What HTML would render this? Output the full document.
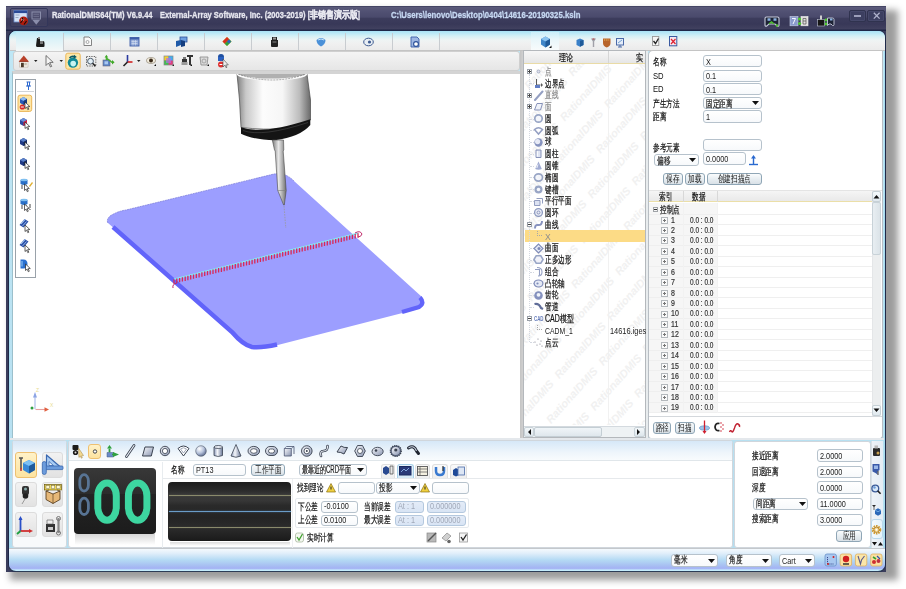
<!DOCTYPE html>
<html><head><meta charset="utf-8">
<style>
*{margin:0;padding:0;box-sizing:border-box}
html,body{width:906px;height:589px;overflow:hidden;background:#fff;font-family:"Liberation Sans",sans-serif;font-size:10px;color:#111}
.a{position:absolute}
.t{position:absolute;white-space:nowrap;transform-origin:0 0;line-height:1}
.c{-webkit-text-stroke:.22px currentColor}
#shadow{left:10px;top:10px;width:888px;height:570px;background:rgba(0,0,0,.39);filter:blur(3.5px)}
#win{left:6px;top:6px;width:880px;height:566px;background:#3a3d5c}
#title{left:6px;top:6px;width:880px;height:25px;background:linear-gradient(#2e3050 0px,#5a5a7a 1px,#505072 6px,#4a4a6c 11px,#3c3c5c 12.5px,#383858 18px,#41415f 23px,#1e2444 24px,#1e2444 25px)}
#client{left:9px;top:31px;width:876px;height:540px;border-radius:7px;background:linear-gradient(#b8e8f8,#c0e6f4 30px,#b4def0);border:1px solid #a8dcef;box-shadow:0 0 0 1px #1e2848}
#tabs{left:10px;top:31px;width:875px;height:19.5px;background:linear-gradient(#a8e2f6 0,#b8e8f6 2px,#d4f0f6 5px,#eef4f4 9px,#f0f0f0 13px,#ebebeb 18.5px,#c4c4c4 18.6px,#c4c4c4 19.5px);border-radius:6px 6px 0 0}
.tab{position:absolute;top:33px;height:17px;width:47px;border-left:1px solid #c8ccd0}
#tb{left:13px;top:51px;width:507px;height:20px;background:linear-gradient(#f4f4f4,#e6e6e6);border:1px solid #cfcfcf;border-radius:3px}
#view{left:11.5px;top:71px;width:508.5px;height:367px;background:#fff;border-top:3px solid #d4d4d4;border-left:1px solid #9cc0cc}
#tree{left:523px;top:50px;width:123px;height:388px;background:#fff;border:1px solid #b9b9b9}
#props{left:647px;top:50px;width:235px;height:388px;background:#fff;border:1px solid #b9b9b9;border-radius:4px}
#bot{left:12px;top:440px;width:870px;height:108px;background:#fafbfc}
#status{left:10px;top:548px;width:874px;height:23px;border-radius:0 0 7px 7px;background:linear-gradient(#eef4fb,#c8d8f4 50%,#a9b5f2)}
.ttl{color:#e8e8f0;font-weight:bold;font-size:9.5px;top:9.5px;-webkit-text-stroke:.3px currentColor}
</style></head><body>
<div id="shadow" class="a"></div>
<div id="win" class="a"></div>
<div id="title" class="a"></div>
<!-- quick access -->
<div class="a" style="left:10px;top:8px;width:38px;height:19px;border:1px solid #33365a;border-radius:2px;background:rgba(255,255,255,.03)"></div>
<svg class="a" style="left:13px;top:9px" width="36" height="18" viewBox="13 9 36 18">
 <rect x="14" y="10.5" width="13" height="11.5" fill="#d4e2f6" stroke="#6a8ac8" stroke-width=".8"/>
 <rect x="14" y="10.5" width="13" height="2.6" fill="#2a4a98"/>
 <path d="M15.5 15 h4 M15.5 17.5 h3" stroke="#8a9ab8" stroke-width=".8"/>
 <circle cx="23.6" cy="20.8" r="4.4" fill="#b01c0c"/><circle cx="22.6" cy="19.6" r="1.6" fill="#f0a898" opacity=".8"/>
 <path d="M20.5 23 l2.5 -3 M24 24.5 l2.5 -3.5 M22 18 l1.5 1.5" stroke="#1a0a08" stroke-width="1.1"/>
 <rect x="32" y="12" width="8.5" height="7" fill="none" stroke="#8a8daa" stroke-width="1"/><path d="M33.5 14.3 h5.5 M33.5 16.6 h5.5" stroke="#7a7d98" stroke-width=".7"/>
 <path d="M32.5 20 h7.5 l-3.75 4.8z" fill="#8a8daa"/>
</svg>
<div class="t ttl" style="left:52px;transform:scaleX(.79)">RationalDMIS64(TM) V6.9.44</div>
<div class="t ttl" style="left:160px;transform:scaleX(.79)">External-Array Software, Inc. (2003-2019) [非销售演示版]</div>
<div class="t ttl" style="left:391px;color:#c6d8f2;transform:scaleX(.815)">C:\Users\lenovo\Desktop\0404\14616-20190325.ksln</div>
<!-- title right icons -->
<svg class="a" style="left:763px;top:14px" width="74" height="14" viewBox="763 14 74 14">
 <path d="M765 18.5 q0 -1.5 1.5 -1.5 h11 q1.5 0 1.5 1.5 v6.5 q0 1.5 -1.5 1.2 l-2.5 -2.2 h-6 l-2.5 2.2 q-1.5 .3 -1.5 -1.2z" fill="#1c2234" stroke="#c8ccdc" stroke-width="1.1"/>
 <rect x="767.5" y="18.3" width="3" height="2.5" fill="#8ab0e0"/><rect x="773.5" y="18.3" width="3" height="2.5" fill="#8ab0e0"/>
 <path d="M769 24 l2.5 -2 l2.5 2" stroke="#50c030" stroke-width="1.5" fill="none"/><circle cx="777" cy="25.5" r="1.2" fill="#50c030"/>
 <rect x="790" y="16.5" width="8" height="9.3" fill="#8a9acc" stroke="#c8d0e8" stroke-width=".6"/><path d="M792 18.5 h3.5 l-2.5 5.5" stroke="#f4f8ff" stroke-width="1" fill="none"/>
 <rect x="801" y="16.5" width="7" height="9.3" fill="#e0dede" stroke="#f0f0f0" stroke-width=".6"/><path d="M803 18.5 h3 v5.5 h-3z M803 21 h3" stroke="#555" stroke-width=".7" fill="none"/>
 <circle cx="799.6" cy="19" r="1.6" fill="#50c830"/><circle cx="799.6" cy="23.5" r="1.6" fill="#50c830"/>
 <rect x="817.5" y="19.5" width="7" height="6.5" fill="#161616" stroke="#bfc4d4" stroke-width=".6"/><path d="M820 15.5 h2 v4 h-2z" fill="#d0d0d0"/>
 <circle cx="826" cy="20" r="1.4" fill="#50c830"/><circle cx="826" cy="24" r="1.4" fill="#50c830"/>
 <path d="M827.5 18 h5 q1.5 0 1.5 1.5 v5 q0 1.5 -1.5 1 l-1.5 -1.5 h-2 l-1.5 1.5z" fill="#1c2234" stroke="#c8ccdc" stroke-width=".9"/><rect x="830" y="18.5" width="2.5" height="2" fill="#8ab0e0"/>
</svg>
<div class="a" style="left:849px;top:9.5px;width:17px;height:12.5px;border:1px solid #30334f;border-radius:2px;background:#3c3f60;box-shadow:inset 0 0 0 1px #45486a"></div>
<div class="a" style="left:867px;top:9.5px;width:17.5px;height:12.5px;border:1px solid #30334f;border-radius:2px;background:#3c3f60;box-shadow:inset 0 0 0 1px #45486a"></div>
<div class="a" style="left:854px;top:15px;width:7px;height:1.5px;background:#9c9fba"></div>
<svg class="a" style="left:873px;top:12px" width="8" height="8"><path d="M.8 .8 L6.6 6.6 M6.6 .8 L.8 6.6" stroke="#b0b3cc" stroke-width="1.3"/></svg>

<div id="client" class="a"></div>
<div id="tabs" class="a"></div>
<div class="a" style="left:16px;top:32px;width:47px;height:18.5px;background:linear-gradient(#c2ecf8,#dcf2f8 40%,#f4f8f8)"></div>
<div class="tab" style="left:63px"></div><div class="tab" style="left:110px"></div><div class="tab" style="left:157px"></div>
<div class="tab" style="left:204px"></div><div class="tab" style="left:251px"></div><div class="tab" style="left:298px"></div>
<div class="tab" style="left:345px"></div><div class="tab" style="left:392px"></div><div class="tab" style="left:439px"></div>
<div id="tb" class="a"></div>
<!-- tab icons -->
<svg class="a" style="left:10px;top:32px" width="512" height="19" viewBox="10 32 512 19">
 <path d="M37 38 h3 v3 h3 q1.5 0 1.5 2 v3 q0 1 -1 1 h-6 q-1.5 0 -1.5 -1.5z" fill="#1c1c1c"/><rect x="38" y="37" width="2" height="2" fill="#888"/><rect x="40" y="41" width="3" height="3" fill="#777"/>
 <path d="M84 37 h5 l2.5 2.5 v6 h-7.5z" fill="#fafafa" stroke="#777" stroke-width=".9"/><circle cx="87.5" cy="42" r="1.5" fill="none" stroke="#888" stroke-width=".7"/>
 <rect x="130" y="37.5" width="9" height="8.5" fill="#8fa6d6" stroke="#3f5ea8" stroke-width=".9"/><rect x="130" y="37.5" width="9" height="2" fill="#3f5ea8"/><path d="M131.5 41.5 h6 M131.5 43.5 h6 M133 40 v5.5 M135.5 40 v5.5" stroke="#d8e2f4" stroke-width=".6"/>
 <rect x="180" y="37" width="7" height="5" fill="#6ea0e0" stroke="#2a4f98" stroke-width=".8"/><path d="M176 41 l5 -1 v5 l-5 2z" fill="#1f5aa8"/><path d="M181 40 l4 1 v5 l-4 1z" fill="#143e80"/>
 <path d="M227 37 l4.5 4.5 l-4.5 4.5 l-4.5 -4.5z" fill="#e0b020"/><path d="M227 37 l-4.5 4.5 l2.3 2.3 l4.5-4.5z" fill="#d83020"/><path d="M231.5 41.5 l-4.5 4.5 l-2.3-2.3 l4.5-4.5z" fill="#30a040"/><path d="M227 41.5 l2 -2 l2 2 l-2 2z" fill="#3060c0"/>
 <path d="M272 37 h5 v3 h1 v6 q0 1 -1 1 h-5 q-1 0 -1 -1 v-6 h1z" fill="#222"/><rect x="273" y="37.5" width="3" height="2" fill="#999"/><rect x="272.5" y="41" width="4" height="2" fill="#555"/>
 <path d="M316.5 40 q4.5 -4 9 0 q0 4 -4.5 6.5 q-4.5 -2.5 -4.5 -6.5z" fill="#4a90d8"/><path d="M318 40 q3 -2 6 0" stroke="#c8e4f8" stroke-width="1" fill="none"/>
 <ellipse cx="368.5" cy="42" rx="4.8" ry="3.8" fill="#e8eef4" stroke="#3d5a90" stroke-width="1"/><circle cx="369.5" cy="42" r="1.6" fill="#3d5a90"/>
 <path d="M411 37 h6 l2 2 v8 h-8z" fill="#9db6e2" stroke="#3a5ea8" stroke-width=".9"/><circle cx="416" cy="44" r="2.4" fill="#fff" stroke="#2a4f98" stroke-width="1.1"/>
</svg>
<!-- toolbar icons -->
<svg class="a" style="left:12px;top:52px" width="509" height="19" viewBox="12 52 509 19">
 <path d="M19.5 61 h8.5 v6.2 h-8.5z" fill="#f4f0ea" stroke="#b8a898" stroke-width=".5"/><path d="M18.6 61.8 l5.2 -6.3 l5.2 6.3 z" fill="#b8402a"/><path d="M19.6 61.5 h8.4" stroke="#8a2a1a" stroke-width=".6"/><rect x="21" y="62.8" width="2.8" height="4.4" fill="#4a3a2a"/><rect x="24.3" y="62.8" width="2.5" height="2.5" fill="#c8c0b0"/>
 <path d="M34 60 h3.5 l-1.75 2z M59.5 60 h3.5 l-1.75 2z M137 60 h3.5 l-1.75 2z" fill="#222"/>
 <path d="M46 55.5 v10 l2.5 -2.5 l2 4 l1.2 -.6 l-2 -4 h3.5z" fill="#f4f4f4" stroke="#555" stroke-width=".8"/>
 <rect x="65.8" y="53.2" width="14.4" height="16" rx="2" fill="#fde6a6" stroke="#eab658" stroke-width="1"/>
 <circle cx="72.9" cy="62.6" r="5.2" fill="#128a96"/><circle cx="73.2" cy="63.6" r="2.8" fill="#c8f4f0"/><path d="M69.5 58 q2.5 -2.5 5.5 -1" stroke="#0a5a66" stroke-width="1.6" fill="none"/><path d="M74 54.8 l2.8 2.3 l-3.2 1.6z" fill="#0a5a66"/>
 <rect x="86.5" y="56.5" width="9.3" height="9.5" fill="none" stroke="#555" stroke-width=".9" stroke-dasharray="1.3 1.1"/><circle cx="90.5" cy="61.2" r="2.9" fill="#e4f0f8" stroke="#4a5a6a" stroke-width="1"/><path d="M92.6 63.3 l2.8 2.8" stroke="#222" stroke-width="1.5"/>
 <rect x="103" y="60" width="7" height="6" fill="#5a84c8" stroke="#6a6a7a" stroke-width=".6"/><rect x="104.5" y="61.3" width="3.5" height="3" fill="#a8c8f0"/><path d="M106.4 57 v3 M106.4 58 l5.5 4.3 h1" stroke="#48b030" stroke-width="1.4" fill="none"/><path d="M104.6 57.5 l1.8 -2.8 l1.8 2.8z M112 60 l2.6 2.3 l-2.6 2.3z" fill="#40a828"/>
 <path d="M127.5 55 v7" stroke="#2a3aa0" stroke-width="1.6"/><path d="M127.5 62 h5" stroke="#d02020" stroke-width="1.6"/><path d="M127.5 62 l-4 4" stroke="#222" stroke-width="1.6"/>
 <ellipse cx="151" cy="60.5" rx="5" ry="3.6" fill="#b0a89a"/><ellipse cx="151" cy="60.5" rx="4" ry="2.4" fill="#f2ecdc"/><circle cx="151" cy="60.5" r="2" fill="#3a2a1a"/><path d="M154 66 l2 -2 v2z M172 66 l2 -2 v2z M190 66 l2 -2 v2z M207 66 l2 -2 v2z" fill="#111"/>
 <rect x="164" y="56" width="9" height="9" fill="#e04080"/><rect x="164" y="56" width="4.5" height="4.5" fill="#f0d030"/><rect x="168.5" y="56" width="4.5" height="4.5" fill="#40b0f0"/><rect x="164" y="60.5" width="4.5" height="4.5" fill="#40c050"/><rect x="166" y="58" width="5" height="5" fill="#b070e0" opacity=".7"/><rect x="164" y="56" width="9" height="9" fill="none" stroke="#888" stroke-width=".7"/>
 <path d="M182 59 h5 v6 h-5z" fill="#333"/><rect x="183" y="57" width="3" height="2" fill="#777"/><path d="M187 56 h6 M190 56 v9" stroke="#333" stroke-width="2"/><rect x="181.5" y="62" width="6" height="3" fill="#999"/>
 <path d="M200 57 h8 l-1 8 h-6z" fill="#dadada" stroke="#888" stroke-width=".8"/><circle cx="204" cy="61" r="2" fill="none" stroke="#999" stroke-width=".8"/>
 <circle cx="221" cy="57" r="3" fill="#2050a0"/><rect x="218" y="57" width="6" height="4" fill="#2a60c0"/><circle cx="221" cy="64.5" r="3" fill="#e03030"/><path d="M219.5 64.5 h3" stroke="#fff" stroke-width="1"/><path d="M223 59 v8 l1.8 -1.8 l1.2 2.5 l1 -.5 l-1.2 -2.3 h2.5z" fill="#eee" stroke="#444" stroke-width=".6"/>
</svg>
<div id="view" class="a"></div>
<!-- viewport scene -->
<svg class="a" style="left:12px;top:74px" width="508" height="364" viewBox="12 74 508 364">
 <defs>
  <linearGradient id="cyl" x1="0" x2="1"><stop offset="0" stop-color="#808080"/><stop offset=".12" stop-color="#c8c8c8"/><stop offset=".35" stop-color="#fcfcfc"/><stop offset=".62" stop-color="#f6f6f6"/><stop offset=".85" stop-color="#bcbcbc"/><stop offset="1" stop-color="#6a6a6a"/></linearGradient>
  <linearGradient id="sty" x1="0" x2="1"><stop offset="0" stop-color="#7a7a7a"/><stop offset=".45" stop-color="#e8e8e8"/><stop offset="1" stop-color="#707070"/></linearGradient>
 </defs>
 <!-- plate thickness -->
 <path d="M108 223 Q106 220 110 216 Q118 211 126 210 L274 174 Q285 172 294 181 L422 297 Q428 304 420 308.5 L272 346.5 Q256 351 247 345 Z" fill="#9c9eff"/>
 <path d="M108 223 Q106 220 110 216 Q118 211 126 210 L274 174 Q285 172 294 181" stroke="#7476d8" stroke-width=".7" fill="none" stroke-dasharray="2 .6"/>
 <path d="M113 227 L232 332 Q243 345 252 347 Q262 348 277 344.5" stroke="#6264fa" stroke-width="4.5" fill="none"/>
 <path d="M420 297.5 Q425 303 419 307 L402 312" stroke="#6264fa" stroke-width="4.2" fill="none"/>
 <!-- scan line -->
 <path d="M174 279.2 L358 233.2" stroke="#86e8f4" stroke-width="1.6" fill="none"/>
 <path d="M174.0 279.3v4.4M176.8 278.6v4.4M179.6 277.9v4.4M182.4 277.2v4.4M185.2 276.5v4.4M187.9 275.8v4.4M190.7 275.1v4.4M193.5 274.4v4.4M196.3 273.7v4.4M199.1 273.0v4.4M201.9 272.3v4.4M204.7 271.6v4.4M207.5 270.9v4.4M210.2 270.2v4.4M213.0 269.5v4.4M215.8 268.8v4.4M218.6 268.1v4.4M221.4 267.5v4.4M224.2 266.8v4.4M227.0 266.1v4.4M229.8 265.4v4.4M232.5 264.7v4.4M235.3 264.0v4.4M238.1 263.3v4.4M240.9 262.6v4.4M243.7 261.9v4.4M246.5 261.2v4.4M249.3 260.5v4.4M252.1 259.8v4.4M254.8 259.1v4.4M257.6 258.4v4.4M260.4 257.7v4.4M263.2 257.0v4.4M266.0 256.3v4.4M268.8 255.6v4.4M271.6 254.9v4.4M274.4 254.2v4.4M277.2 253.5v4.4M279.9 252.8v4.4M282.7 252.1v4.4M285.5 251.4v4.4M288.3 250.7v4.4M291.1 250.0v4.4M293.9 249.3v4.4M296.7 248.6v4.4M299.5 247.9v4.4M302.2 247.2v4.4M305.0 246.5v4.4M307.8 245.8v4.4M310.6 245.1v4.4M313.4 244.5v4.4M316.2 243.8v4.4M319.0 243.1v4.4M321.8 242.4v4.4M324.5 241.7v4.4M327.3 241.0v4.4M330.1 240.3v4.4M332.9 239.6v4.4M335.7 238.9v4.4M338.5 238.2v4.4M341.3 237.5v4.4M344.1 236.8v4.4M346.8 236.1v4.4M349.6 235.4v4.4M352.4 234.7v4.4M355.2 234.0v4.4M358.0 233.3v4.4" stroke="#d82a58" stroke-width="1.3" fill="none"/>
 <path d="M355 233 q5 -3 7 1 q-1 3 -4 3" stroke="#c02a6a" stroke-width="1" fill="none"/><path d="M177 283 q-5 1 -4 5" stroke="#c02a6a" stroke-width="1" fill="none"/>
 <!-- probe -->
 <path d="M237 74 L307 74 L310.5 100 L310.5 120 Q290 133 241 127.5 L239.5 100 Z" fill="url(#cyl)" stroke="#4a4a4a" stroke-width=".7"/>
 <ellipse cx="272" cy="73.5" rx="34.5" ry="6" fill="#b0b0b0" stroke="#fafafa" stroke-width="2"/><path d="M238 74 Q272 86 306 74" stroke="#555" stroke-width=".5" fill="none" stroke-dasharray="2 1"/>
 <path d="M241 127.3 Q262 135 310.3 119.3 V125 Q300 137 275 140.3 Q250 139 241 133.8 Z" fill="#141414"/>
 <path d="M243 130.5 Q262 137.5 308 122.5" stroke="#4a4a4a" stroke-width=".6" fill="none"/>
  <path d="M272.3 140 L283.5 140 L283.8 150 L283.2 151 L286.2 190.5 L284.3 205 L283.6 205 L277.8 190.5 L275.2 151 L274.5 150 Z" fill="url(#sty)" stroke="#4a4a4a" stroke-width=".6"/>
 <path d="M277.8 190.5 L286.2 190.5" stroke="#7a7a7a" stroke-width=".6"/>
 <path d="M284 206 L285.8 228" stroke="#9a9ab0" stroke-width="1" stroke-dasharray="1.6 1.1"/>
 <!-- axis triad -->
 <path d="M35 409 V395" stroke="#a8b8e8" stroke-width="1.1"/><path d="M33 397.5 l2 -5.5 l2 5.5z" fill="#8ca4e4"/>
 <path d="M35.5 409.5 H45" stroke="#e8a0a0" stroke-width="1.1"/><path d="M44.5 407.3 l4.5 2.2 l-4.5 2.2z" fill="#e06040"/>
 <circle cx="32" cy="408" r="1.5" fill="#30a040"/>
 <text x="36" y="391.5" font-size="5" fill="#e8dc90" font-family="Liberation Sans">Z</text><text x="50" y="406.5" font-size="5" fill="#e8dc90" font-family="Liberation Sans">X</text>
</svg>
<!-- floating left toolbar -->
<div class="a" style="left:15px;top:79px;width:21px;height:199px;border:1px solid #9aa2aa;background:#fff"></div>
<div class="a" style="left:17px;top:91px;width:17px;height:1px;background:#d0d4d8"></div>
<svg class="a" style="left:15px;top:79px" width="21" height="199" viewBox="15 79 21 199">
<path d="M26.5 82 h4 M27.5 82 v4 h2 v-4 M26 86 h5 M28.5 86 v4" stroke="#2f6ad0" stroke-width="1" fill="none"/>
<rect x="18" y="95.2" width="13.7" height="16.2" rx="2" fill="#fde6a6" stroke="#eab658"/>
<path d="M20 99 l3.5 -2 l3.5 2 v4 l-3.5 2 l-3.5 -2z" fill="#2a5ab8"/><path d="M20 99 l3.5 2 l3.5 -2 l-3.5 -2z" fill="#8ab8f0"/><path d="M23.5 101 v4 l3.5 -2 v-4z" fill="#183a80"/>
<circle cx="22.3" cy="107" r="2.6" fill="#d82828"/><path d="M20.8 107 h3" stroke="#fff" stroke-width="1"/>
<path d="M25 102 l0 6.5 l1.6 -1.4 l1.2 2.6 l1 -.5 l-1.2 -2.5 l2.2 -.2z" fill="#fff" stroke="#222" stroke-width=".7"/>
<path d="M20 120 l3.5 -2 l3.5 2 v4 l-3.5 2 l-3.5 -2z" fill="#2a4aa0"/><path d="M20 120 l3.5 2 l3.5 -2 l-3.5 -2z" fill="#6a90d8"/><path d="M23.5 122 v4 l3.5 -2 v-4z" fill="#d82040"/>
<path d="M25 122 l0 6.5 l1.6 -1.4 l1.2 2.6 l1 -.5 l-1.2 -2.5 l2.2 -.2z" fill="#fff" stroke="#222" stroke-width=".7"/>
<path d="M20 140 l3.5 -2 l3.5 2 v4 l-3.5 2 l-3.5 -2z" fill="#203a88"/><path d="M20 140 l3.5 2 l3.5 -2 l-3.5 -2z" fill="#5a80c8"/><path d="M23.5 142 v4 l3.5 -2 v-4z" fill="#142a60"/>
<path d="M25 142 l0 6.5 l1.6 -1.4 l1.2 2.6 l1 -.5 l-1.2 -2.5 l2.2 -.2z" fill="#fff" stroke="#222" stroke-width=".7"/>
<path d="M20 160 l3.5 -2 l3.5 2 v4 l-3.5 2 l-3.5 -2z" fill="#203a88"/><path d="M20 160 l3.5 2 l3.5 -2 l-3.5 -2z" fill="#5a80c8"/><path d="M23.5 162 v4 l3.5 -2 v-4z" fill="#142a60"/>
<path d="M25 162 l0 6.5 l1.6 -1.4 l1.2 2.6 l1 -.5 l-1.2 -2.5 l2.2 -.2z" fill="#fff" stroke="#222" stroke-width=".7"/>
<path d="M20.5 180 q3.5 -2 7 0 v4 q-3.5 2 -7 0z" fill="#2a70c8"/><ellipse cx="24" cy="180" rx="3.5" ry="1.2" fill="#80c0f0"/>
<path d="M22 185 v4 M26 185 v4" stroke="#333" stroke-width=".9"/>
<path d="M24.5 184 l0 6.5 l1.6 -1.4 l1.2 2.6 l1 -.5 l-1.2 -2.5 l2.2 -.2z" fill="#fff" stroke="#222" stroke-width=".7"/>
<path d="M29 186 l3 -4 l1 1 l-3 4z" fill="#e0b030"/>
<path d="M20.5 200 q3.5 -2 7 0 v4 q-3.5 2 -7 0z" fill="#2a70c8"/><ellipse cx="24" cy="200" rx="3.5" ry="1.2" fill="#80c0f0"/>
<path d="M22 205 v4 M26 205 v4" stroke="#333" stroke-width=".9"/>
<path d="M24.5 204 l0 6.5 l1.6 -1.4 l1.2 2.6 l1 -.5 l-1.2 -2.5 l2.2 -.2z" fill="#fff" stroke="#222" stroke-width=".7"/>
<path d="M30 204 v4 M30 209 v1" stroke="#444" stroke-width="1"/>
<path d="M19.5 225 l5 -6 l4 2.5 l-5 6z" fill="#2a50a8"/><path d="M21 224 l4 -4.5" stroke="#a8c8f0" stroke-width="1.1"/><path d="M22.5 226 l4 -4.5" stroke="#a8c8f0" stroke-width=".8"/>
<path d="M25 225 l0 6.5 l1.6 -1.4 l1.2 2.6 l1 -.5 l-1.2 -2.5 l2.2 -.2z" fill="#fff" stroke="#222" stroke-width=".7"/>
<path d="M19.5 245 l5 -6 l4 2.5 l-5 6z" fill="#2a50a8"/><path d="M21 244 l4 -4.5" stroke="#a8c8f0" stroke-width="1.1"/><path d="M22.5 246 l4 -4.5" stroke="#a8c8f0" stroke-width=".8"/>
<path d="M25 245 l0 6.5 l1.6 -1.4 l1.2 2.6 l1 -.5 l-1.2 -2.5 l2.2 -.2z" fill="#fff" stroke="#222" stroke-width=".7"/>
<path d="M20.5 259.5 h3 q4 0 4 4.5 q0 4.5 -4 4.5 h-3z" fill="#2a70d0"/><path d="M22 261 v5.5" stroke="#9ad0f8" stroke-width="1"/>
<path d="M25.5 264 l0 6.5 l1.6 -1.4 l1.2 2.6 l1 -.5 l-1.2 -2.5 l2.2 -.2z" fill="#fff" stroke="#222" stroke-width=".7"/>
</svg>

<div class="a" style="left:531px;top:32px;width:28px;height:18px;background:linear-gradient(#c9eef9,#e8f6fa 40%,#f8fbfc)"></div>
<svg class="a" style="left:530px;top:32px" width="160" height="18" viewBox="530 32 160 18">
 <path d="M541 39 l4.5 -2.5 l4.5 2.5 v5.5 l-4.5 3 l-4.5 -3z" fill="#3f86c8"/><path d="M541 39 l4.5 2.5 l4.5 -2.5 l-4.5 -2.5z" fill="#8cc4f0"/><path d="M545.5 41.5 v6 l4.5 -3 v-5.5z" fill="#1f5a98"/><path d="M549 48 l2.5 -2.5 v2.5z" fill="#111"/>
 <path d="M576.5 40 l3.5 -1.5 l3.5 1.5 v5 l-3.5 1.8 l-3.5 -1.8z" fill="#3a80c8"/><path d="M580 40.8 v6 l3.5 -1.8 v-5z" fill="#1f5a98"/>
 <path d="M591 38.5 h5 l-1.8 3 v5.5 h-1.4 v-5.5z" fill="#a0a0a8"/><path d="M592.5 39 h2" stroke="#c04040" stroke-width="1"/>
 <path d="M603 38.5 h7.5 v4.5 q0 3 -3.75 4.5 q-3.75 -1.5 -3.75 -4.5z" fill="#b8642a"/><path d="M604 40 h5.5" stroke="#f0c060" stroke-width="1" stroke-dasharray="1 .8"/>
 <rect x="616.5" y="38.5" width="7" height="6.5" fill="#e4ecf8" stroke="#4a6aa8" stroke-width="1"/><path d="M618 47 h4 M620 45 v2" stroke="#4a6aa8" stroke-width="1"/><path d="M618 43 l4 -3" stroke="#70a0d0" stroke-width="1"/>
 <rect x="652.5" y="36.5" width="6.3" height="9" fill="#f4f4f4" stroke="#999" stroke-width=".9"/><path d="M653.5 41 l2 2.5 l3 -5" stroke="#222" stroke-width="1.3" fill="none"/>
 <rect x="669.5" y="36.5" width="7.3" height="9.3" fill="#f4e8f0" stroke="#3a5aa0" stroke-width="1"/><path d="M671 39 l4.5 5 M675.5 39 l-4.5 5" stroke="#e02030" stroke-width="1.2"/>
</svg>
<div class="a" style="left:520px;top:50.5px;width:3.5px;height:387.5px;background:linear-gradient(90deg,#c4c4c4,#d4d4d4)"></div>
<div class="a" style="left:646px;top:50.5px;width:1.5px;height:387.5px;background:#e8ecee"></div>
<div class="a" style="left:523px;top:50px;width:123.0px;height:388.0px;background:#fff;border:1px solid #b4b8bc"></div>
<div class="a" style="left:524px;top:51px;width:121.0px;height:12.5px;background:linear-gradient(#f7f7f7,#e6e6e6);border-bottom:1px solid #e9dba6"></div>
<div class="a" style="left:608px;top:51px;width:1.0px;height:12.0px;background:#d6d6d6"></div>
<div class="a" style="left:608px;top:64px;width:1.0px;height:361.0px;background:#f1f1f1"></div>
<div class="t c" style="left:559px;top:52.8px;font-size:10px;color:#111;transform:scaleX(0.7)">理论</div>
<div class="t c" style="left:636px;top:52.8px;font-size:10px;color:#111;transform:scaleX(0.7)">实</div>
<svg class="a" style="left:524px;top:64px" width="121" height="361" viewBox="0 0 121 361"><g fill="#f1f1f1" font-family="Liberation Sans" font-weight="bold" font-style="italic" font-size="11" transform="translate(60,180) rotate(-48)"><text x="-390" y="-384.0">RationalDMIS</text><text x="-312" y="-384.0">RationalDMIS</text><text x="-234" y="-384.0">RationalDMIS</text><text x="-156" y="-384.0">RationalDMIS</text><text x="-78" y="-384.0">RationalDMIS</text><text x="0" y="-384.0">RationalDMIS</text><text x="78" y="-384.0">RationalDMIS</text><text x="156" y="-384.0">RationalDMIS</text><text x="234" y="-384.0">RationalDMIS</text><text x="312" y="-384.0">RationalDMIS</text><text x="390" y="-384.0">RationalDMIS</text><text x="-351" y="-360.0">RationalDMIS</text><text x="-273" y="-360.0">RationalDMIS</text><text x="-195" y="-360.0">RationalDMIS</text><text x="-117" y="-360.0">RationalDMIS</text><text x="-39" y="-360.0">RationalDMIS</text><text x="39" y="-360.0">RationalDMIS</text><text x="117" y="-360.0">RationalDMIS</text><text x="195" y="-360.0">RationalDMIS</text><text x="273" y="-360.0">RationalDMIS</text><text x="351" y="-360.0">RationalDMIS</text><text x="429" y="-360.0">RationalDMIS</text><text x="-390" y="-336.0">RationalDMIS</text><text x="-312" y="-336.0">RationalDMIS</text><text x="-234" y="-336.0">RationalDMIS</text><text x="-156" y="-336.0">RationalDMIS</text><text x="-78" y="-336.0">RationalDMIS</text><text x="0" y="-336.0">RationalDMIS</text><text x="78" y="-336.0">RationalDMIS</text><text x="156" y="-336.0">RationalDMIS</text><text x="234" y="-336.0">RationalDMIS</text><text x="312" y="-336.0">RationalDMIS</text><text x="390" y="-336.0">RationalDMIS</text><text x="-351" y="-312.0">RationalDMIS</text><text x="-273" y="-312.0">RationalDMIS</text><text x="-195" y="-312.0">RationalDMIS</text><text x="-117" y="-312.0">RationalDMIS</text><text x="-39" y="-312.0">RationalDMIS</text><text x="39" y="-312.0">RationalDMIS</text><text x="117" y="-312.0">RationalDMIS</text><text x="195" y="-312.0">RationalDMIS</text><text x="273" y="-312.0">RationalDMIS</text><text x="351" y="-312.0">RationalDMIS</text><text x="429" y="-312.0">RationalDMIS</text><text x="-390" y="-288.0">RationalDMIS</text><text x="-312" y="-288.0">RationalDMIS</text><text x="-234" y="-288.0">RationalDMIS</text><text x="-156" y="-288.0">RationalDMIS</text><text x="-78" y="-288.0">RationalDMIS</text><text x="0" y="-288.0">RationalDMIS</text><text x="78" y="-288.0">RationalDMIS</text><text x="156" y="-288.0">RationalDMIS</text><text x="234" y="-288.0">RationalDMIS</text><text x="312" y="-288.0">RationalDMIS</text><text x="390" y="-288.0">RationalDMIS</text><text x="-351" y="-264.0">RationalDMIS</text><text x="-273" y="-264.0">RationalDMIS</text><text x="-195" y="-264.0">RationalDMIS</text><text x="-117" y="-264.0">RationalDMIS</text><text x="-39" y="-264.0">RationalDMIS</text><text x="39" y="-264.0">RationalDMIS</text><text x="117" y="-264.0">RationalDMIS</text><text x="195" y="-264.0">RationalDMIS</text><text x="273" y="-264.0">RationalDMIS</text><text x="351" y="-264.0">RationalDMIS</text><text x="429" y="-264.0">RationalDMIS</text><text x="-390" y="-240.0">RationalDMIS</text><text x="-312" y="-240.0">RationalDMIS</text><text x="-234" y="-240.0">RationalDMIS</text><text x="-156" y="-240.0">RationalDMIS</text><text x="-78" y="-240.0">RationalDMIS</text><text x="0" y="-240.0">RationalDMIS</text><text x="78" y="-240.0">RationalDMIS</text><text x="156" y="-240.0">RationalDMIS</text><text x="234" y="-240.0">RationalDMIS</text><text x="312" y="-240.0">RationalDMIS</text><text x="390" y="-240.0">RationalDMIS</text><text x="-351" y="-216.0">RationalDMIS</text><text x="-273" y="-216.0">RationalDMIS</text><text x="-195" y="-216.0">RationalDMIS</text><text x="-117" y="-216.0">RationalDMIS</text><text x="-39" y="-216.0">RationalDMIS</text><text x="39" y="-216.0">RationalDMIS</text><text x="117" y="-216.0">RationalDMIS</text><text x="195" y="-216.0">RationalDMIS</text><text x="273" y="-216.0">RationalDMIS</text><text x="351" y="-216.0">RationalDMIS</text><text x="429" y="-216.0">RationalDMIS</text><text x="-390" y="-192.0">RationalDMIS</text><text x="-312" y="-192.0">RationalDMIS</text><text x="-234" y="-192.0">RationalDMIS</text><text x="-156" y="-192.0">RationalDMIS</text><text x="-78" y="-192.0">RationalDMIS</text><text x="0" y="-192.0">RationalDMIS</text><text x="78" y="-192.0">RationalDMIS</text><text x="156" y="-192.0">RationalDMIS</text><text x="234" y="-192.0">RationalDMIS</text><text x="312" y="-192.0">RationalDMIS</text><text x="390" y="-192.0">RationalDMIS</text><text x="-351" y="-168.0">RationalDMIS</text><text x="-273" y="-168.0">RationalDMIS</text><text x="-195" y="-168.0">RationalDMIS</text><text x="-117" y="-168.0">RationalDMIS</text><text x="-39" y="-168.0">RationalDMIS</text><text x="39" y="-168.0">RationalDMIS</text><text x="117" y="-168.0">RationalDMIS</text><text x="195" y="-168.0">RationalDMIS</text><text x="273" y="-168.0">RationalDMIS</text><text x="351" y="-168.0">RationalDMIS</text><text x="429" y="-168.0">RationalDMIS</text><text x="-390" y="-144.0">RationalDMIS</text><text x="-312" y="-144.0">RationalDMIS</text><text x="-234" y="-144.0">RationalDMIS</text><text x="-156" y="-144.0">RationalDMIS</text><text x="-78" y="-144.0">RationalDMIS</text><text x="0" y="-144.0">RationalDMIS</text><text x="78" y="-144.0">RationalDMIS</text><text x="156" y="-144.0">RationalDMIS</text><text x="234" y="-144.0">RationalDMIS</text><text x="312" y="-144.0">RationalDMIS</text><text x="390" y="-144.0">RationalDMIS</text><text x="-351" y="-120.0">RationalDMIS</text><text x="-273" y="-120.0">RationalDMIS</text><text x="-195" y="-120.0">RationalDMIS</text><text x="-117" y="-120.0">RationalDMIS</text><text x="-39" y="-120.0">RationalDMIS</text><text x="39" y="-120.0">RationalDMIS</text><text x="117" y="-120.0">RationalDMIS</text><text x="195" y="-120.0">RationalDMIS</text><text x="273" y="-120.0">RationalDMIS</text><text x="351" y="-120.0">RationalDMIS</text><text x="429" y="-120.0">RationalDMIS</text><text x="-390" y="-96.0">RationalDMIS</text><text x="-312" y="-96.0">RationalDMIS</text><text x="-234" y="-96.0">RationalDMIS</text><text x="-156" y="-96.0">RationalDMIS</text><text x="-78" y="-96.0">RationalDMIS</text><text x="0" y="-96.0">RationalDMIS</text><text x="78" y="-96.0">RationalDMIS</text><text x="156" y="-96.0">RationalDMIS</text><text x="234" y="-96.0">RationalDMIS</text><text x="312" y="-96.0">RationalDMIS</text><text x="390" y="-96.0">RationalDMIS</text><text x="-351" y="-72.0">RationalDMIS</text><text x="-273" y="-72.0">RationalDMIS</text><text x="-195" y="-72.0">RationalDMIS</text><text x="-117" y="-72.0">RationalDMIS</text><text x="-39" y="-72.0">RationalDMIS</text><text x="39" y="-72.0">RationalDMIS</text><text x="117" y="-72.0">RationalDMIS</text><text x="195" y="-72.0">RationalDMIS</text><text x="273" y="-72.0">RationalDMIS</text><text x="351" y="-72.0">RationalDMIS</text><text x="429" y="-72.0">RationalDMIS</text><text x="-390" y="-48.0">RationalDMIS</text><text x="-312" y="-48.0">RationalDMIS</text><text x="-234" y="-48.0">RationalDMIS</text><text x="-156" y="-48.0">RationalDMIS</text><text x="-78" y="-48.0">RationalDMIS</text><text x="0" y="-48.0">RationalDMIS</text><text x="78" y="-48.0">RationalDMIS</text><text x="156" y="-48.0">RationalDMIS</text><text x="234" y="-48.0">RationalDMIS</text><text x="312" y="-48.0">RationalDMIS</text><text x="390" y="-48.0">RationalDMIS</text><text x="-351" y="-24.0">RationalDMIS</text><text x="-273" y="-24.0">RationalDMIS</text><text x="-195" y="-24.0">RationalDMIS</text><text x="-117" y="-24.0">RationalDMIS</text><text x="-39" y="-24.0">RationalDMIS</text><text x="39" y="-24.0">RationalDMIS</text><text x="117" y="-24.0">RationalDMIS</text><text x="195" y="-24.0">RationalDMIS</text><text x="273" y="-24.0">RationalDMIS</text><text x="351" y="-24.0">RationalDMIS</text><text x="429" y="-24.0">RationalDMIS</text><text x="-390" y="0.0">RationalDMIS</text><text x="-312" y="0.0">RationalDMIS</text><text x="-234" y="0.0">RationalDMIS</text><text x="-156" y="0.0">RationalDMIS</text><text x="-78" y="0.0">RationalDMIS</text><text x="0" y="0.0">RationalDMIS</text><text x="78" y="0.0">RationalDMIS</text><text x="156" y="0.0">RationalDMIS</text><text x="234" y="0.0">RationalDMIS</text><text x="312" y="0.0">RationalDMIS</text><text x="390" y="0.0">RationalDMIS</text><text x="-351" y="24.0">RationalDMIS</text><text x="-273" y="24.0">RationalDMIS</text><text x="-195" y="24.0">RationalDMIS</text><text x="-117" y="24.0">RationalDMIS</text><text x="-39" y="24.0">RationalDMIS</text><text x="39" y="24.0">RationalDMIS</text><text x="117" y="24.0">RationalDMIS</text><text x="195" y="24.0">RationalDMIS</text><text x="273" y="24.0">RationalDMIS</text><text x="351" y="24.0">RationalDMIS</text><text x="429" y="24.0">RationalDMIS</text><text x="-390" y="48.0">RationalDMIS</text><text x="-312" y="48.0">RationalDMIS</text><text x="-234" y="48.0">RationalDMIS</text><text x="-156" y="48.0">RationalDMIS</text><text x="-78" y="48.0">RationalDMIS</text><text x="0" y="48.0">RationalDMIS</text><text x="78" y="48.0">RationalDMIS</text><text x="156" y="48.0">RationalDMIS</text><text x="234" y="48.0">RationalDMIS</text><text x="312" y="48.0">RationalDMIS</text><text x="390" y="48.0">RationalDMIS</text><text x="-351" y="72.0">RationalDMIS</text><text x="-273" y="72.0">RationalDMIS</text><text x="-195" y="72.0">RationalDMIS</text><text x="-117" y="72.0">RationalDMIS</text><text x="-39" y="72.0">RationalDMIS</text><text x="39" y="72.0">RationalDMIS</text><text x="117" y="72.0">RationalDMIS</text><text x="195" y="72.0">RationalDMIS</text><text x="273" y="72.0">RationalDMIS</text><text x="351" y="72.0">RationalDMIS</text><text x="429" y="72.0">RationalDMIS</text><text x="-390" y="96.0">RationalDMIS</text><text x="-312" y="96.0">RationalDMIS</text><text x="-234" y="96.0">RationalDMIS</text><text x="-156" y="96.0">RationalDMIS</text><text x="-78" y="96.0">RationalDMIS</text><text x="0" y="96.0">RationalDMIS</text><text x="78" y="96.0">RationalDMIS</text><text x="156" y="96.0">RationalDMIS</text><text x="234" y="96.0">RationalDMIS</text><text x="312" y="96.0">RationalDMIS</text><text x="390" y="96.0">RationalDMIS</text><text x="-351" y="120.0">RationalDMIS</text><text x="-273" y="120.0">RationalDMIS</text><text x="-195" y="120.0">RationalDMIS</text><text x="-117" y="120.0">RationalDMIS</text><text x="-39" y="120.0">RationalDMIS</text><text x="39" y="120.0">RationalDMIS</text><text x="117" y="120.0">RationalDMIS</text><text x="195" y="120.0">RationalDMIS</text><text x="273" y="120.0">RationalDMIS</text><text x="351" y="120.0">RationalDMIS</text><text x="429" y="120.0">RationalDMIS</text><text x="-390" y="144.0">RationalDMIS</text><text x="-312" y="144.0">RationalDMIS</text><text x="-234" y="144.0">RationalDMIS</text><text x="-156" y="144.0">RationalDMIS</text><text x="-78" y="144.0">RationalDMIS</text><text x="0" y="144.0">RationalDMIS</text><text x="78" y="144.0">RationalDMIS</text><text x="156" y="144.0">RationalDMIS</text><text x="234" y="144.0">RationalDMIS</text><text x="312" y="144.0">RationalDMIS</text><text x="390" y="144.0">RationalDMIS</text><text x="-351" y="168.0">RationalDMIS</text><text x="-273" y="168.0">RationalDMIS</text><text x="-195" y="168.0">RationalDMIS</text><text x="-117" y="168.0">RationalDMIS</text><text x="-39" y="168.0">RationalDMIS</text><text x="39" y="168.0">RationalDMIS</text><text x="117" y="168.0">RationalDMIS</text><text x="195" y="168.0">RationalDMIS</text><text x="273" y="168.0">RationalDMIS</text><text x="351" y="168.0">RationalDMIS</text><text x="429" y="168.0">RationalDMIS</text><text x="-390" y="192.0">RationalDMIS</text><text x="-312" y="192.0">RationalDMIS</text><text x="-234" y="192.0">RationalDMIS</text><text x="-156" y="192.0">RationalDMIS</text><text x="-78" y="192.0">RationalDMIS</text><text x="0" y="192.0">RationalDMIS</text><text x="78" y="192.0">RationalDMIS</text><text x="156" y="192.0">RationalDMIS</text><text x="234" y="192.0">RationalDMIS</text><text x="312" y="192.0">RationalDMIS</text><text x="390" y="192.0">RationalDMIS</text><text x="-351" y="216.0">RationalDMIS</text><text x="-273" y="216.0">RationalDMIS</text><text x="-195" y="216.0">RationalDMIS</text><text x="-117" y="216.0">RationalDMIS</text><text x="-39" y="216.0">RationalDMIS</text><text x="39" y="216.0">RationalDMIS</text><text x="117" y="216.0">RationalDMIS</text><text x="195" y="216.0">RationalDMIS</text><text x="273" y="216.0">RationalDMIS</text><text x="351" y="216.0">RationalDMIS</text><text x="429" y="216.0">RationalDMIS</text><text x="-390" y="240.0">RationalDMIS</text><text x="-312" y="240.0">RationalDMIS</text><text x="-234" y="240.0">RationalDMIS</text><text x="-156" y="240.0">RationalDMIS</text><text x="-78" y="240.0">RationalDMIS</text><text x="0" y="240.0">RationalDMIS</text><text x="78" y="240.0">RationalDMIS</text><text x="156" y="240.0">RationalDMIS</text><text x="234" y="240.0">RationalDMIS</text><text x="312" y="240.0">RationalDMIS</text><text x="390" y="240.0">RationalDMIS</text><text x="-351" y="264.0">RationalDMIS</text><text x="-273" y="264.0">RationalDMIS</text><text x="-195" y="264.0">RationalDMIS</text><text x="-117" y="264.0">RationalDMIS</text><text x="-39" y="264.0">RationalDMIS</text><text x="39" y="264.0">RationalDMIS</text><text x="117" y="264.0">RationalDMIS</text><text x="195" y="264.0">RationalDMIS</text><text x="273" y="264.0">RationalDMIS</text><text x="351" y="264.0">RationalDMIS</text><text x="429" y="264.0">RationalDMIS</text><text x="-390" y="288.0">RationalDMIS</text><text x="-312" y="288.0">RationalDMIS</text><text x="-234" y="288.0">RationalDMIS</text><text x="-156" y="288.0">RationalDMIS</text><text x="-78" y="288.0">RationalDMIS</text><text x="0" y="288.0">RationalDMIS</text><text x="78" y="288.0">RationalDMIS</text><text x="156" y="288.0">RationalDMIS</text><text x="234" y="288.0">RationalDMIS</text><text x="312" y="288.0">RationalDMIS</text><text x="390" y="288.0">RationalDMIS</text><text x="-351" y="312.0">RationalDMIS</text><text x="-273" y="312.0">RationalDMIS</text><text x="-195" y="312.0">RationalDMIS</text><text x="-117" y="312.0">RationalDMIS</text><text x="-39" y="312.0">RationalDMIS</text><text x="39" y="312.0">RationalDMIS</text><text x="117" y="312.0">RationalDMIS</text><text x="195" y="312.0">RationalDMIS</text><text x="273" y="312.0">RationalDMIS</text><text x="351" y="312.0">RationalDMIS</text><text x="429" y="312.0">RationalDMIS</text><text x="-390" y="336.0">RationalDMIS</text><text x="-312" y="336.0">RationalDMIS</text><text x="-234" y="336.0">RationalDMIS</text><text x="-156" y="336.0">RationalDMIS</text><text x="-78" y="336.0">RationalDMIS</text><text x="0" y="336.0">RationalDMIS</text><text x="78" y="336.0">RationalDMIS</text><text x="156" y="336.0">RationalDMIS</text><text x="234" y="336.0">RationalDMIS</text><text x="312" y="336.0">RationalDMIS</text><text x="390" y="336.0">RationalDMIS</text><text x="-351" y="360.0">RationalDMIS</text><text x="-273" y="360.0">RationalDMIS</text><text x="-195" y="360.0">RationalDMIS</text><text x="-117" y="360.0">RationalDMIS</text><text x="-39" y="360.0">RationalDMIS</text><text x="39" y="360.0">RationalDMIS</text><text x="117" y="360.0">RationalDMIS</text><text x="195" y="360.0">RationalDMIS</text><text x="273" y="360.0">RationalDMIS</text><text x="351" y="360.0">RationalDMIS</text><text x="429" y="360.0">RationalDMIS</text><text x="-390" y="384.0">RationalDMIS</text><text x="-312" y="384.0">RationalDMIS</text><text x="-234" y="384.0">RationalDMIS</text><text x="-156" y="384.0">RationalDMIS</text><text x="-78" y="384.0">RationalDMIS</text><text x="0" y="384.0">RationalDMIS</text><text x="78" y="384.0">RationalDMIS</text><text x="156" y="384.0">RationalDMIS</text><text x="234" y="384.0">RationalDMIS</text><text x="312" y="384.0">RationalDMIS</text><text x="390" y="384.0">RationalDMIS</text><text x="-351" y="408.0">RationalDMIS</text><text x="-273" y="408.0">RationalDMIS</text><text x="-195" y="408.0">RationalDMIS</text><text x="-117" y="408.0">RationalDMIS</text><text x="-39" y="408.0">RationalDMIS</text><text x="39" y="408.0">RationalDMIS</text><text x="117" y="408.0">RationalDMIS</text><text x="195" y="408.0">RationalDMIS</text><text x="273" y="408.0">RationalDMIS</text><text x="351" y="408.0">RationalDMIS</text><text x="429" y="408.0">RationalDMIS</text></g></svg>
<div class="a" style="left:524.5px;top:230px;width:120.5px;height:11.6px;background:#fcdb86"></div>
<div class="a" style="left:529px;top:74px;width:0;height:268px;border-left:1px dotted #d4d8e0"></div>
<div class="a" style="left:526.5px;top:69.0px;width:5.0px;height:5.0px;border:1px solid #9aa0a8;background:#fff"></div>
<div class="a" style="left:527.5px;top:71.0px;width:3.0px;height:1.0px;background:#444"></div>
<div class="a" style="left:528.5px;top:70.0px;width:1.0px;height:3.0px;background:#444"></div>
<div class="t c" style="left:544.5px;top:66.8px;font-size:10px;color:#8c8c8c;transform:scaleX(0.66)">点</div>
<svg class="a" style="left:533px;top:66.0px;opacity:.8" width="11" height="11" viewBox="0 0 11 11"><circle cx="5.5" cy="5.5" r="1.5" fill="#dde" stroke="#8a96b0" stroke-width=".9"/></svg>
<div class="a" style="left:530px;top:83.27px;width:4.0px;height:0.0px;border-top:1px dotted #d4d8e0"></div>
<div class="t c" style="left:544.5px;top:78.6px;font-size:10px;color:#111;transform:scaleX(0.66)">边界点</div>
<svg class="a" style="left:533px;top:77.8px;opacity:.8" width="11" height="11" viewBox="0 0 11 11"><path d="M3.5 1 v6 h4" stroke="#333" stroke-width="1" fill="none"/><path d="M2 7 h5 v3 h-5z" fill="#3a5fb8"/><path d="M8 5 l2 2 l-2 2z" fill="#333"/></svg>
<div class="a" style="left:526.5px;top:92.53999999999999px;width:5.0px;height:5.0px;border:1px solid #9aa0a8;background:#fff"></div>
<div class="a" style="left:527.5px;top:94.53999999999999px;width:3.0px;height:1.0px;background:#444"></div>
<div class="a" style="left:528.5px;top:93.53999999999999px;width:1.0px;height:3.0px;background:#444"></div>
<div class="t c" style="left:544.5px;top:90.3px;font-size:10px;color:#8c8c8c;transform:scaleX(0.66)">直线</div>
<svg class="a" style="left:533px;top:89.5px;opacity:.8" width="11" height="11" viewBox="0 0 11 11"><path d="M2 10 L9.5 1.5" stroke="#7a88b4" stroke-width="2" stroke-linecap="round"/></svg>
<div class="a" style="left:526.5px;top:104.31px;width:5.0px;height:5.0px;border:1px solid #9aa0a8;background:#fff"></div>
<div class="a" style="left:527.5px;top:106.31px;width:3.0px;height:1.0px;background:#444"></div>
<div class="a" style="left:528.5px;top:105.31px;width:1.0px;height:3.0px;background:#444"></div>
<div class="t c" style="left:544.5px;top:102.1px;font-size:10px;color:#8c8c8c;transform:scaleX(0.66)">面</div>
<svg class="a" style="left:533px;top:101.3px;opacity:.8" width="11" height="11" viewBox="0 0 11 11"><path d="M1.5 9 l2.5 -6.5 h5.5 l-2 6.5z" fill="#eef2fa" stroke="#6a78a8" stroke-width="1"/></svg>
<div class="a" style="left:530px;top:118.58px;width:4.0px;height:0.0px;border-top:1px dotted #d4d8e0"></div>
<div class="t c" style="left:544.5px;top:113.9px;font-size:10px;color:#111;transform:scaleX(0.66)">圆</div>
<svg class="a" style="left:533px;top:113.1px;opacity:.8" width="11" height="11" viewBox="0 0 11 11"><circle cx="5.5" cy="5.5" r="3.7" fill="#f2f4fa" stroke="#8090b8" stroke-width="1.7"/></svg>
<div class="a" style="left:530px;top:130.35px;width:4.0px;height:0.0px;border-top:1px dotted #d4d8e0"></div>
<div class="t c" style="left:544.5px;top:125.7px;font-size:10px;color:#111;transform:scaleX(0.66)">圆弧</div>
<svg class="a" style="left:533px;top:124.8px;opacity:.8" width="11" height="11" viewBox="0 0 11 11"><path d="M1.5 4.5 Q5.5 1 9.5 4.5 L5.5 9z" fill="none" stroke="#7a88b4" stroke-width="1.5"/></svg>
<div class="a" style="left:530px;top:142.12px;width:4.0px;height:0.0px;border-top:1px dotted #d4d8e0"></div>
<div class="t c" style="left:544.5px;top:137.4px;font-size:10px;color:#111;transform:scaleX(0.66)">球</div>
<svg class="a" style="left:533px;top:136.6px;opacity:.8" width="11" height="11" viewBox="0 0 11 11"><circle cx="5.5" cy="5.5" r="4.2" fill="#6a7ab0"/><circle cx="4.6" cy="4.6" r="2.6" fill="#e4e8f6"/></svg>
<div class="a" style="left:530px;top:153.89px;width:4.0px;height:0.0px;border-top:1px dotted #d4d8e0"></div>
<div class="t c" style="left:544.5px;top:149.2px;font-size:10px;color:#111;transform:scaleX(0.66)">圆柱</div>
<svg class="a" style="left:533px;top:148.4px;opacity:.8" width="11" height="11" viewBox="0 0 11 11"><path d="M3 2 h5 v7.5 h-5z" fill="#d8def0" stroke="#6a78a8" stroke-width="1"/><path d="M4.3 3 v5.5" stroke="#fff" stroke-width="1"/></svg>
<div class="a" style="left:530px;top:165.66px;width:4.0px;height:0.0px;border-top:1px dotted #d4d8e0"></div>
<div class="t c" style="left:544.5px;top:161.0px;font-size:10px;color:#111;transform:scaleX(0.66)">圆锥</div>
<svg class="a" style="left:533px;top:160.2px;opacity:.8" width="11" height="11" viewBox="0 0 11 11"><path d="M5.5 1.5 L8.8 9 Q5.5 10.5 2.2 9z" fill="#8a98c8"/><path d="M5 4.5 l-1.2 3.5" stroke="#eef0fa" stroke-width="1"/></svg>
<div class="a" style="left:530px;top:177.43px;width:4.0px;height:0.0px;border-top:1px dotted #d4d8e0"></div>
<div class="t c" style="left:544.5px;top:172.7px;font-size:10px;color:#111;transform:scaleX(0.66)">椭圆</div>
<svg class="a" style="left:533px;top:171.9px;opacity:.8" width="11" height="11" viewBox="0 0 11 11"><ellipse cx="5.5" cy="5.5" rx="4" ry="3.6" fill="#f2f4fa" stroke="#8090b8" stroke-width="1.7"/></svg>
<div class="a" style="left:530px;top:189.2px;width:4.0px;height:0.0px;border-top:1px dotted #d4d8e0"></div>
<div class="t c" style="left:544.5px;top:184.5px;font-size:10px;color:#111;transform:scaleX(0.66)">键槽</div>
<svg class="a" style="left:533px;top:183.7px;opacity:.8" width="11" height="11" viewBox="0 0 11 11"><circle cx="5.5" cy="5.5" r="4" fill="#8090b8"/><circle cx="5.5" cy="5.5" r="1.8" fill="#f4f6fb"/></svg>
<div class="a" style="left:530px;top:200.97px;width:4.0px;height:0.0px;border-top:1px dotted #d4d8e0"></div>
<div class="t c" style="left:544.5px;top:196.3px;font-size:10px;color:#111;transform:scaleX(0.66)">平行平面</div>
<svg class="a" style="left:533px;top:195.5px;opacity:.8" width="11" height="11" viewBox="0 0 11 11"><path d="M1.5 4.5 h5.5 v5 h-5.5z" fill="#d4dcf0" stroke="#6a78a8" stroke-width=".9"/><path d="M3.5 2.5 h6 v5" fill="none" stroke="#6a78a8" stroke-width=".9"/></svg>
<div class="a" style="left:530px;top:212.74px;width:4.0px;height:0.0px;border-top:1px dotted #d4d8e0"></div>
<div class="t c" style="left:544.5px;top:208.0px;font-size:10px;color:#111;transform:scaleX(0.66)">圆环</div>
<svg class="a" style="left:533px;top:207.2px;opacity:.8" width="11" height="11" viewBox="0 0 11 11"><circle cx="5.5" cy="5.5" r="3.9" fill="#e4e8f4" stroke="#7080b0" stroke-width="1.3"/><circle cx="5.5" cy="5.5" r="1.5" fill="none" stroke="#6a78a8" stroke-width=".9"/></svg>
<div class="a" style="left:526.5px;top:222.01px;width:5.0px;height:5.0px;border:1px solid #9aa0a8;background:#fff"></div>
<div class="a" style="left:527.5px;top:224.01px;width:3.0px;height:1.0px;background:#444"></div>
<div class="t c" style="left:544.5px;top:219.8px;font-size:10px;color:#111;transform:scaleX(0.66)">曲线</div>
<svg class="a" style="left:533px;top:219.0px;opacity:.8" width="11" height="11" viewBox="0 0 11 11"><path d="M2 9.5 Q2 5.5 5 6 Q9 6.5 9 2" stroke="#6a78b0" stroke-width="2" fill="none"/></svg>
<div class="a" style="left:537px;top:231.28px;width:5.0px;height:5.0px;border-left:1px dotted #a8a8a8;border-bottom:1px dotted #a8a8a8"></div>
<div class="t" style="left:545px;top:231.6px;font-size:9.5px;color:#8c8c8c;transform:scaleX(0.9);">X</div>
<div class="a" style="left:530px;top:248.04999999999998px;width:4.0px;height:0.0px;border-top:1px dotted #d4d8e0"></div>
<div class="t c" style="left:544.5px;top:243.3px;font-size:10px;color:#111;transform:scaleX(0.66)">曲面</div>
<svg class="a" style="left:533px;top:242.5px;opacity:.8" width="11" height="11" viewBox="0 0 11 11"><path d="M1 5.5 l4.5 -4.5 l4.5 4.5 l-4.5 4.5z" fill="#e0e6f6" stroke="#6070a8" stroke-width="1.1"/><circle cx="6" cy="5.5" r="1.5" fill="#6070a8"/></svg>
<div class="a" style="left:530px;top:259.82px;width:4.0px;height:0.0px;border-top:1px dotted #d4d8e0"></div>
<div class="t c" style="left:544.5px;top:255.1px;font-size:10px;color:#111;transform:scaleX(0.66)">正多边形</div>
<svg class="a" style="left:533px;top:254.3px;opacity:.8" width="11" height="11" viewBox="0 0 11 11"><path d="M3.2 1.8 h4.6 l2.3 3.7 l-2.3 3.7 h-4.6 l-2.3 -3.7z" fill="#eef0f8" stroke="#8090b8" stroke-width="1.6"/></svg>
<div class="a" style="left:530px;top:271.59000000000003px;width:4.0px;height:0.0px;border-top:1px dotted #d4d8e0"></div>
<div class="t c" style="left:544.5px;top:266.9px;font-size:10px;color:#111;transform:scaleX(0.66)">组合</div>
<svg class="a" style="left:533px;top:266.1px;opacity:.8" width="11" height="11" viewBox="0 0 11 11"><path d="M2 3.5 h4.5 v6" stroke="#7a88b4" stroke-width="1.1" fill="none"/><path d="M4 1.5 q5 0 5 4.5 q0 4 -4 4" stroke="#7a88b4" stroke-width="1.1" fill="none"/></svg>
<div class="a" style="left:530px;top:283.36px;width:4.0px;height:0.0px;border-top:1px dotted #d4d8e0"></div>
<div class="t c" style="left:544.5px;top:278.7px;font-size:10px;color:#111;transform:scaleX(0.66)">凸轮轴</div>
<svg class="a" style="left:533px;top:277.9px;opacity:.8" width="11" height="11" viewBox="0 0 11 11"><ellipse cx="5.5" cy="5.5" rx="4.4" ry="3.5" fill="#e0e6f4" stroke="#6070a8" stroke-width="1.2"/><circle cx="4.5" cy="5.5" r="1.1" fill="#6070a8"/></svg>
<div class="a" style="left:530px;top:295.13px;width:4.0px;height:0.0px;border-top:1px dotted #d4d8e0"></div>
<div class="t c" style="left:544.5px;top:290.4px;font-size:10px;color:#111;transform:scaleX(0.66)">齿轮</div>
<svg class="a" style="left:533px;top:289.6px;opacity:.8" width="11" height="11" viewBox="0 0 11 11"><circle cx="5.5" cy="5.5" r="4.3" fill="#6878b0"/><circle cx="5.5" cy="4.8" r="1.9" fill="#eef2fa"/></svg>
<div class="a" style="left:530px;top:306.9px;width:4.0px;height:0.0px;border-top:1px dotted #d4d8e0"></div>
<div class="t c" style="left:544.5px;top:302.2px;font-size:10px;color:#111;transform:scaleX(0.66)">管道</div>
<svg class="a" style="left:533px;top:301.4px;opacity:.8" width="11" height="11" viewBox="0 0 11 11"><path d="M1.5 3 Q6 2 8 7 l2 1" stroke="#3a4a80" stroke-width="2.2" fill="none"/></svg>
<div class="a" style="left:526.5px;top:316.16999999999996px;width:5.0px;height:5.0px;border:1px solid #9aa0a8;background:#fff"></div>
<div class="a" style="left:527.5px;top:318.16999999999996px;width:3.0px;height:1.0px;background:#444"></div>
<div class="t c" style="left:545px;top:314.0px;font-size:10px;color:#111;transform:scaleX(0.7)">CAD模型</div>
<svg class="a" style="left:534px;top:313.2px;opacity:.8" width="11" height="11" viewBox="0 0 11 11"><text x="0" y="8.5" font-size="8" font-family="Liberation Sans" font-weight="bold" fill="#3a58a8" transform="scale(.55,1)">CAD</text></svg>
<div class="a" style="left:537px;top:325.44px;width:5.0px;height:5.0px;border-left:1px dotted #a8a8a8;border-bottom:1px dotted #a8a8a8"></div>
<div class="t" style="left:545px;top:325.7px;font-size:9.5px;color:#222;transform:scaleX(0.72);">CADM_1</div>
<div class="t" style="left:610px;top:325.7px;font-size:9.5px;color:#222;transform:scaleX(0.78);">14616.iges</div>
<div class="a" style="left:530px;top:342.21px;width:4.0px;height:0.0px;border-top:1px dotted #d4d8e0"></div>
<div class="t c" style="left:544.5px;top:337.5px;font-size:10px;color:#111;transform:scaleX(0.66)">点云</div>
<svg class="a" style="left:533px;top:336.7px;opacity:.8" width="11" height="11" viewBox="0 0 11 11"><g fill="#556"><circle cx="2" cy="5" r=".6"/><circle cx="5" cy="2" r=".6"/><circle cx="8" cy="4" r=".6"/><circle cx="4" cy="8" r=".6"/><circle cx="7" cy="7" r=".6"/><circle cx="9" cy="9" r=".6"/></g></svg>
<div class="a" style="left:524px;top:426px;width:121.0px;height:11.0px;background:#eef2f4;border-top:1px solid #d4dadf"></div>
<div class="a" style="left:524px;top:427px;width:10.0px;height:10.0px;background:linear-gradient(#f4f8fa,#dde6ec);border:1px solid #c8d2d8;border-radius:2px"></div>
<div class="a" style="left:534px;top:427px;width:68.0px;height:10.0px;background:linear-gradient(#f0f5f8,#dfe7ec);border:1px solid #c4ced4;border-radius:2px"></div>
<div class="a" style="left:634px;top:427px;width:11.0px;height:10.0px;background:linear-gradient(#f4f8fa,#dde6ec);border:1px solid #c8d2d8;border-radius:2px"></div>
<svg class="a" style="left:524px;top:427px" width="121" height="10"><path d="M4 5 l3 -3 v6z M116 5 l-3 -3 v6z" fill="#111"/></svg>
<div class="a" style="left:647.5px;top:50px;width:235.0px;height:388.5px;background:#fff;border:1px solid #b8bec4;border-top-color:#c4c4c4;border-radius:5px 1px 3px 3px"></div>
<div class="t c" style="left:652.5px;top:57.1px;font-size:10px;color:#111;transform:scaleX(0.66)">名称</div>
<div class="a" style="left:703px;top:55.2px;width:59.0px;height:12.2px;border:1px solid #b6c2cc;border-radius:3px;background:linear-gradient(#fff,#f7f9fb)"></div>
<div class="t" style="left:706px;top:57.7px;font-size:8.6px;color:#222;transform:scaleX(0.85);">X</div>
<div class="t" style="left:652.5px;top:71.6px;font-size:9px;color:#111;transform:scaleX(0.85);">SD</div>
<div class="a" style="left:703px;top:69.5px;width:59.0px;height:12.2px;border:1px solid #b6c2cc;border-radius:3px;background:linear-gradient(#fff,#f7f9fb)"></div>
<div class="t" style="left:706px;top:72.0px;font-size:8.6px;color:#222;transform:scaleX(0.85);">0.1</div>
<div class="t" style="left:652.5px;top:85.3px;font-size:9px;color:#111;transform:scaleX(0.85);">ED</div>
<div class="a" style="left:703px;top:83.2px;width:59.0px;height:12.1px;border:1px solid #b6c2cc;border-radius:3px;background:linear-gradient(#fff,#f7f9fb)"></div>
<div class="t" style="left:706px;top:85.6px;font-size:8.6px;color:#222;transform:scaleX(0.85);">0.1</div>
<div class="t c" style="left:652.5px;top:98.7px;font-size:10px;color:#111;transform:scaleX(0.66)">产生方法</div>
<div class="a" style="left:703px;top:96.8px;width:59.0px;height:12.2px;border:1px solid #b6c2cc;border-radius:3px;background:linear-gradient(#fff,#f7f9fb)"></div>
<div class="t c" style="left:706px;top:98.5px;font-size:10px;color:#222;transform:scaleX(0.66)">固定距离</div>
<svg class="a" style="left:752.0px;top:100.9px" width="7" height="5"><path d="M0 0 h7 l-3.5 4z" fill="#111"/></svg>
<div class="t c" style="left:652.5px;top:112.3px;font-size:10px;color:#111;transform:scaleX(0.66)">距离</div>
<div class="a" style="left:703px;top:110.4px;width:59.0px;height:12.2px;border:1px solid #b6c2cc;border-radius:3px;background:linear-gradient(#fff,#f7f9fb)"></div>
<div class="t" style="left:706px;top:112.9px;font-size:8.6px;color:#222;transform:scaleX(0.85);">1</div>
<div class="t c" style="left:652.5px;top:142.5px;font-size:10px;color:#111;transform:scaleX(0.66)">参考元素</div>
<div class="a" style="left:703px;top:138.8px;width:59.0px;height:12.2px;border:1px solid #b6c2cc;border-radius:3px;background:linear-gradient(#fff,#f7f9fb)"></div>
<div class="a" style="left:653.5px;top:153.8px;width:45.5px;height:12.2px;border:1px solid #b6c2cc;border-radius:3px;background:linear-gradient(#fff,#f7f9fb)"></div>
<div class="t c" style="left:656.5px;top:155.5px;font-size:10px;color:#222;transform:scaleX(0.66)">偏移</div>
<svg class="a" style="left:689.0px;top:157.9px" width="7" height="5"><path d="M0 0 h7 l-3.5 4z" fill="#111"/></svg>
<div class="a" style="left:703px;top:152.4px;width:42.5px;height:12.9px;border:1px solid #b6c2cc;border-radius:3px;background:linear-gradient(#fff,#f7f9fb)"></div>
<div class="t" style="left:706px;top:155.2px;font-size:8.6px;color:#222;transform:scaleX(0.85);">0.0000</div>
<svg class="a" style="left:748px;top:154px" width="11" height="12"><path d="M5.5 1 l-2.5 3.5 h1.8 v5.5 h1.4 v-5.5 h1.8z" fill="#2a6ad0"/><path d="M1 10.5 h9" stroke="#2a6ad0" stroke-width="1.4"/></svg>
<div class="a" style="left:663px;top:173.2px;width:19.6px;height:12.2px;border:1px solid #8fa6b6;border-radius:3px;background:linear-gradient(#fafcfd,#e8eef2 50%,#d9e1e7)"></div>
<div class="t" style="left:663px;top:174.1px;width:29.7px;text-align:center;font-size:10px;transform:scaleX(0.66)">保存</div>
<div class="a" style="left:685px;top:173.2px;width:19.5px;height:12.2px;border:1px solid #8fa6b6;border-radius:3px;background:linear-gradient(#fafcfd,#e8eef2 50%,#d9e1e7)"></div>
<div class="t" style="left:685px;top:174.1px;width:29.5px;text-align:center;font-size:10px;transform:scaleX(0.66)">加载</div>
<div class="a" style="left:707.4px;top:173.2px;width:54.6px;height:12.2px;border:1px solid #8fa6b6;border-radius:3px;background:linear-gradient(#fafcfd,#e8eef2 50%,#d9e1e7)"></div>
<div class="t" style="left:707.4px;top:174.1px;width:82.7px;text-align:center;font-size:10px;transform:scaleX(0.66)">创建扫描点</div>
<div class="a" style="left:648.5px;top:189.5px;width:233.0px;height:1.0px;background:#e4e4e4"></div>
<div class="a" style="left:648.5px;top:190.5px;width:223.5px;height:11.5px;background:linear-gradient(#f5f5f5,#e9e9e9);border-bottom:1px solid #ebdfa8"></div>
<div class="a" style="left:682.5px;top:191px;width:1.0px;height:11.0px;background:#d8d8d8"></div>
<div class="a" style="left:716.5px;top:191px;width:1.0px;height:11.0px;background:#d8d8d8"></div>
<div class="t c" style="left:658.5px;top:191.6px;font-size:10px;color:#111;transform:scaleX(0.66)">索引</div>
<div class="t c" style="left:692px;top:191.6px;font-size:10px;color:#111;transform:scaleX(0.66)">数据</div>
<div class="a" style="left:648.5px;top:202.5px;width:68.5px;height:213.5px;background:#f6f6f6"></div>
<div class="a" style="left:648.5px;top:214.2px;width:223.5px;height:1.0px;background:#efefef"></div>
<div class="a" style="left:648.5px;top:224.29999999999998px;width:223.5px;height:1.0px;background:#efefef"></div>
<div class="a" style="left:648.5px;top:234.73999999999998px;width:223.5px;height:1.0px;background:#efefef"></div>
<div class="a" style="left:648.5px;top:245.17999999999998px;width:223.5px;height:1.0px;background:#efefef"></div>
<div class="a" style="left:648.5px;top:255.61999999999998px;width:223.5px;height:1.0px;background:#efefef"></div>
<div class="a" style="left:648.5px;top:266.06px;width:223.5px;height:1.0px;background:#efefef"></div>
<div class="a" style="left:648.5px;top:276.5px;width:223.5px;height:1.0px;background:#efefef"></div>
<div class="a" style="left:648.5px;top:286.94px;width:223.5px;height:1.0px;background:#efefef"></div>
<div class="a" style="left:648.5px;top:297.38px;width:223.5px;height:1.0px;background:#efefef"></div>
<div class="a" style="left:648.5px;top:307.82px;width:223.5px;height:1.0px;background:#efefef"></div>
<div class="a" style="left:648.5px;top:318.26px;width:223.5px;height:1.0px;background:#efefef"></div>
<div class="a" style="left:648.5px;top:328.7px;width:223.5px;height:1.0px;background:#efefef"></div>
<div class="a" style="left:648.5px;top:339.14px;width:223.5px;height:1.0px;background:#efefef"></div>
<div class="a" style="left:648.5px;top:349.58px;width:223.5px;height:1.0px;background:#efefef"></div>
<div class="a" style="left:648.5px;top:360.02px;width:223.5px;height:1.0px;background:#efefef"></div>
<div class="a" style="left:648.5px;top:370.46px;width:223.5px;height:1.0px;background:#efefef"></div>
<div class="a" style="left:648.5px;top:380.9px;width:223.5px;height:1.0px;background:#efefef"></div>
<div class="a" style="left:648.5px;top:391.34px;width:223.5px;height:1.0px;background:#efefef"></div>
<div class="a" style="left:648.5px;top:401.78px;width:223.5px;height:1.0px;background:#efefef"></div>
<div class="a" style="left:648.5px;top:412.21999999999997px;width:223.5px;height:1.0px;background:#efefef"></div>
<div class="a" style="left:682.5px;top:202.5px;width:1.0px;height:213.5px;background:#f2f2f2"></div>
<div class="a" style="left:716.5px;top:202.5px;width:1.0px;height:213.5px;background:#f2f2f2"></div>
<div class="a" style="left:652.5px;top:207px;width:5.0px;height:5.0px;border:1px solid #a0a4a8"></div>
<div class="a" style="left:653.5px;top:209px;width:3.0px;height:1.0px;background:#333"></div>
<div class="t c" style="left:660px;top:205.1px;font-size:10px;color:#111;transform:scaleX(0.66)">控制点</div>
<div class="a" style="left:661px;top:217px;width:7.0px;height:7.0px;border:1px solid #b4b8bc;background:#fafafa"></div>
<div class="a" style="left:663px;top:220px;width:3.0px;height:1.0px;background:#777"></div>
<div class="a" style="left:664px;top:219px;width:1.0px;height:3.0px;background:#777"></div>
<div class="t" style="left:670.5px;top:215.5px;font-size:9px;color:#333;transform:scaleX(.78);-webkit-text-stroke:.2px #333">1</div>
<div class="t" style="left:689.8px;top:215.5px;font-size:9px;color:#333;transform:scaleX(.72);-webkit-text-stroke:.2px #333">0.0 : 0.0</div>
<div class="a" style="left:661px;top:227px;width:7.0px;height:7.0px;border:1px solid #b4b8bc;background:#fafafa"></div>
<div class="a" style="left:663px;top:230px;width:3.0px;height:1.0px;background:#777"></div>
<div class="a" style="left:664px;top:229px;width:1.0px;height:3.0px;background:#777"></div>
<div class="t" style="left:670.5px;top:225.9px;font-size:9px;color:#333;transform:scaleX(.78);-webkit-text-stroke:.2px #333">2</div>
<div class="t" style="left:689.8px;top:225.9px;font-size:9px;color:#333;transform:scaleX(.72);-webkit-text-stroke:.2px #333">0.0 : 0.0</div>
<div class="a" style="left:661px;top:237px;width:7.0px;height:7.0px;border:1px solid #b4b8bc;background:#fafafa"></div>
<div class="a" style="left:663px;top:240px;width:3.0px;height:1.0px;background:#777"></div>
<div class="a" style="left:664px;top:239px;width:1.0px;height:3.0px;background:#777"></div>
<div class="t" style="left:670.5px;top:236.3px;font-size:9px;color:#333;transform:scaleX(.78);-webkit-text-stroke:.2px #333">3</div>
<div class="t" style="left:689.8px;top:236.3px;font-size:9px;color:#333;transform:scaleX(.72);-webkit-text-stroke:.2px #333">0.0 : 0.0</div>
<div class="a" style="left:661px;top:248px;width:7.0px;height:7.0px;border:1px solid #b4b8bc;background:#fafafa"></div>
<div class="a" style="left:663px;top:251px;width:3.0px;height:1.0px;background:#777"></div>
<div class="a" style="left:664px;top:250px;width:1.0px;height:3.0px;background:#777"></div>
<div class="t" style="left:670.5px;top:246.8px;font-size:9px;color:#333;transform:scaleX(.78);-webkit-text-stroke:.2px #333">4</div>
<div class="t" style="left:689.8px;top:246.8px;font-size:9px;color:#333;transform:scaleX(.72);-webkit-text-stroke:.2px #333">0.0 : 0.0</div>
<div class="a" style="left:661px;top:258px;width:7.0px;height:7.0px;border:1px solid #b4b8bc;background:#fafafa"></div>
<div class="a" style="left:663px;top:261px;width:3.0px;height:1.0px;background:#777"></div>
<div class="a" style="left:664px;top:260px;width:1.0px;height:3.0px;background:#777"></div>
<div class="t" style="left:670.5px;top:257.2px;font-size:9px;color:#333;transform:scaleX(.78);-webkit-text-stroke:.2px #333">5</div>
<div class="t" style="left:689.8px;top:257.2px;font-size:9px;color:#333;transform:scaleX(.72);-webkit-text-stroke:.2px #333">0.0 : 0.0</div>
<div class="a" style="left:661px;top:269px;width:7.0px;height:7.0px;border:1px solid #b4b8bc;background:#fafafa"></div>
<div class="a" style="left:663px;top:272px;width:3.0px;height:1.0px;background:#777"></div>
<div class="a" style="left:664px;top:271px;width:1.0px;height:3.0px;background:#777"></div>
<div class="t" style="left:670.5px;top:267.7px;font-size:9px;color:#333;transform:scaleX(.78);-webkit-text-stroke:.2px #333">6</div>
<div class="t" style="left:689.8px;top:267.7px;font-size:9px;color:#333;transform:scaleX(.72);-webkit-text-stroke:.2px #333">0.0 : 0.0</div>
<div class="a" style="left:661px;top:279px;width:7.0px;height:7.0px;border:1px solid #b4b8bc;background:#fafafa"></div>
<div class="a" style="left:663px;top:282px;width:3.0px;height:1.0px;background:#777"></div>
<div class="a" style="left:664px;top:281px;width:1.0px;height:3.0px;background:#777"></div>
<div class="t" style="left:670.5px;top:278.1px;font-size:9px;color:#333;transform:scaleX(.78);-webkit-text-stroke:.2px #333">7</div>
<div class="t" style="left:689.8px;top:278.1px;font-size:9px;color:#333;transform:scaleX(.72);-webkit-text-stroke:.2px #333">0.0 : 0.0</div>
<div class="a" style="left:661px;top:290px;width:7.0px;height:7.0px;border:1px solid #b4b8bc;background:#fafafa"></div>
<div class="a" style="left:663px;top:293px;width:3.0px;height:1.0px;background:#777"></div>
<div class="a" style="left:664px;top:292px;width:1.0px;height:3.0px;background:#777"></div>
<div class="t" style="left:670.5px;top:288.5px;font-size:9px;color:#333;transform:scaleX(.78);-webkit-text-stroke:.2px #333">8</div>
<div class="t" style="left:689.8px;top:288.5px;font-size:9px;color:#333;transform:scaleX(.72);-webkit-text-stroke:.2px #333">0.0 : 0.0</div>
<div class="a" style="left:661px;top:300px;width:7.0px;height:7.0px;border:1px solid #b4b8bc;background:#fafafa"></div>
<div class="a" style="left:663px;top:303px;width:3.0px;height:1.0px;background:#777"></div>
<div class="a" style="left:664px;top:302px;width:1.0px;height:3.0px;background:#777"></div>
<div class="t" style="left:670.5px;top:299.0px;font-size:9px;color:#333;transform:scaleX(.78);-webkit-text-stroke:.2px #333">9</div>
<div class="t" style="left:689.8px;top:299.0px;font-size:9px;color:#333;transform:scaleX(.72);-webkit-text-stroke:.2px #333">0.0 : 0.0</div>
<div class="a" style="left:661px;top:311px;width:7.0px;height:7.0px;border:1px solid #b4b8bc;background:#fafafa"></div>
<div class="a" style="left:663px;top:314px;width:3.0px;height:1.0px;background:#777"></div>
<div class="a" style="left:664px;top:313px;width:1.0px;height:3.0px;background:#777"></div>
<div class="t" style="left:670.5px;top:309.4px;font-size:9px;color:#333;transform:scaleX(.78);-webkit-text-stroke:.2px #333">10</div>
<div class="t" style="left:689.8px;top:309.4px;font-size:9px;color:#333;transform:scaleX(.72);-webkit-text-stroke:.2px #333">0.0 : 0.0</div>
<div class="a" style="left:661px;top:321px;width:7.0px;height:7.0px;border:1px solid #b4b8bc;background:#fafafa"></div>
<div class="a" style="left:663px;top:324px;width:3.0px;height:1.0px;background:#777"></div>
<div class="a" style="left:664px;top:323px;width:1.0px;height:3.0px;background:#777"></div>
<div class="t" style="left:670.5px;top:319.9px;font-size:9px;color:#333;transform:scaleX(.78);-webkit-text-stroke:.2px #333">11</div>
<div class="t" style="left:689.8px;top:319.9px;font-size:9px;color:#333;transform:scaleX(.72);-webkit-text-stroke:.2px #333">0.0 : 0.0</div>
<div class="a" style="left:661px;top:331px;width:7.0px;height:7.0px;border:1px solid #b4b8bc;background:#fafafa"></div>
<div class="a" style="left:663px;top:334px;width:3.0px;height:1.0px;background:#777"></div>
<div class="a" style="left:664px;top:333px;width:1.0px;height:3.0px;background:#777"></div>
<div class="t" style="left:670.5px;top:330.3px;font-size:9px;color:#333;transform:scaleX(.78);-webkit-text-stroke:.2px #333">12</div>
<div class="t" style="left:689.8px;top:330.3px;font-size:9px;color:#333;transform:scaleX(.72);-webkit-text-stroke:.2px #333">0.0 : 0.0</div>
<div class="a" style="left:661px;top:342px;width:7.0px;height:7.0px;border:1px solid #b4b8bc;background:#fafafa"></div>
<div class="a" style="left:663px;top:345px;width:3.0px;height:1.0px;background:#777"></div>
<div class="a" style="left:664px;top:344px;width:1.0px;height:3.0px;background:#777"></div>
<div class="t" style="left:670.5px;top:340.7px;font-size:9px;color:#333;transform:scaleX(.78);-webkit-text-stroke:.2px #333">13</div>
<div class="t" style="left:689.8px;top:340.7px;font-size:9px;color:#333;transform:scaleX(.72);-webkit-text-stroke:.2px #333">0.0 : 0.0</div>
<div class="a" style="left:661px;top:352px;width:7.0px;height:7.0px;border:1px solid #b4b8bc;background:#fafafa"></div>
<div class="a" style="left:663px;top:355px;width:3.0px;height:1.0px;background:#777"></div>
<div class="a" style="left:664px;top:354px;width:1.0px;height:3.0px;background:#777"></div>
<div class="t" style="left:670.5px;top:351.2px;font-size:9px;color:#333;transform:scaleX(.78);-webkit-text-stroke:.2px #333">14</div>
<div class="t" style="left:689.8px;top:351.2px;font-size:9px;color:#333;transform:scaleX(.72);-webkit-text-stroke:.2px #333">0.0 : 0.0</div>
<div class="a" style="left:661px;top:363px;width:7.0px;height:7.0px;border:1px solid #b4b8bc;background:#fafafa"></div>
<div class="a" style="left:663px;top:366px;width:3.0px;height:1.0px;background:#777"></div>
<div class="a" style="left:664px;top:365px;width:1.0px;height:3.0px;background:#777"></div>
<div class="t" style="left:670.5px;top:361.6px;font-size:9px;color:#333;transform:scaleX(.78);-webkit-text-stroke:.2px #333">15</div>
<div class="t" style="left:689.8px;top:361.6px;font-size:9px;color:#333;transform:scaleX(.72);-webkit-text-stroke:.2px #333">0.0 : 0.0</div>
<div class="a" style="left:661px;top:373px;width:7.0px;height:7.0px;border:1px solid #b4b8bc;background:#fafafa"></div>
<div class="a" style="left:663px;top:376px;width:3.0px;height:1.0px;background:#777"></div>
<div class="a" style="left:664px;top:375px;width:1.0px;height:3.0px;background:#777"></div>
<div class="t" style="left:670.5px;top:372.1px;font-size:9px;color:#333;transform:scaleX(.78);-webkit-text-stroke:.2px #333">16</div>
<div class="t" style="left:689.8px;top:372.1px;font-size:9px;color:#333;transform:scaleX(.72);-webkit-text-stroke:.2px #333">0.0 : 0.0</div>
<div class="a" style="left:661px;top:384px;width:7.0px;height:7.0px;border:1px solid #b4b8bc;background:#fafafa"></div>
<div class="a" style="left:663px;top:387px;width:3.0px;height:1.0px;background:#777"></div>
<div class="a" style="left:664px;top:386px;width:1.0px;height:3.0px;background:#777"></div>
<div class="t" style="left:670.5px;top:382.5px;font-size:9px;color:#333;transform:scaleX(.78);-webkit-text-stroke:.2px #333">17</div>
<div class="t" style="left:689.8px;top:382.5px;font-size:9px;color:#333;transform:scaleX(.72);-webkit-text-stroke:.2px #333">0.0 : 0.0</div>
<div class="a" style="left:661px;top:394px;width:7.0px;height:7.0px;border:1px solid #b4b8bc;background:#fafafa"></div>
<div class="a" style="left:663px;top:397px;width:3.0px;height:1.0px;background:#777"></div>
<div class="a" style="left:664px;top:396px;width:1.0px;height:3.0px;background:#777"></div>
<div class="t" style="left:670.5px;top:392.9px;font-size:9px;color:#333;transform:scaleX(.78);-webkit-text-stroke:.2px #333">18</div>
<div class="t" style="left:689.8px;top:392.9px;font-size:9px;color:#333;transform:scaleX(.72);-webkit-text-stroke:.2px #333">0.0 : 0.0</div>
<div class="a" style="left:661px;top:405px;width:7.0px;height:7.0px;border:1px solid #b4b8bc;background:#fafafa"></div>
<div class="a" style="left:663px;top:408px;width:3.0px;height:1.0px;background:#777"></div>
<div class="a" style="left:664px;top:407px;width:1.0px;height:3.0px;background:#777"></div>
<div class="t" style="left:670.5px;top:403.4px;font-size:9px;color:#333;transform:scaleX(.78);-webkit-text-stroke:.2px #333">19</div>
<div class="t" style="left:689.8px;top:403.4px;font-size:9px;color:#333;transform:scaleX(.72);-webkit-text-stroke:.2px #333">0.0 : 0.0</div>
<div class="a" style="left:648.5px;top:412.5px;width:223.5px;height:4.0px;background:#fff"></div>
<div class="a" style="left:648.5px;top:416px;width:233.0px;height:1.0px;background:#d4d8dc"></div>
<div class="a" style="left:872px;top:191px;width:9.0px;height:225.0px;background:#eceeef;border-left:1px solid #e4e6e8"></div>
<div class="a" style="left:872px;top:191.2px;width:9.0px;height:10.7px;background:linear-gradient(#f6fafc,#dfe8ee);border:1px solid #c6d0d6;border-radius:2px"></div>
<div class="a" style="left:872px;top:202px;width:9.0px;height:53.4px;background:linear-gradient(90deg,#e8eef2,#dbe3e8);border:1px solid #c8d2d8;border-radius:2px"></div>
<div class="a" style="left:872px;top:405px;width:9.0px;height:11.0px;background:linear-gradient(#f6fafc,#dfe8ee);border:1px solid #c6d0d6;border-radius:2px"></div>
<svg class="a" style="left:872px;top:191px" width="9" height="226"><path d="M1.5 7.5 l3 -3.5 l3 3.5z M1.5 217.5 l3 3.5 l3 -3.5z" fill="#111"/></svg>
<div class="a" style="left:652.7px;top:422px;width:18.8px;height:11.5px;border:1px solid #8fa6b6;border-radius:3px;background:linear-gradient(#fafcfd,#e8eef2 50%,#d9e1e7)"></div>
<div class="t" style="left:652.7px;top:422.6px;width:28.5px;text-align:center;font-size:10px;transform:scaleX(0.66)">路径</div>
<div class="a" style="left:675.3px;top:422px;width:19.9px;height:11.5px;border:1px solid #8fa6b6;border-radius:3px;background:linear-gradient(#fafcfd,#e8eef2 50%,#d9e1e7)"></div>
<div class="t" style="left:675.3px;top:422.6px;width:30.2px;text-align:center;font-size:10px;transform:scaleX(0.66)">扫描</div>
<svg class="a" style="left:698px;top:419px" width="45" height="17" viewBox="698 419 45 17">
 <ellipse cx="704.5" cy="428" rx="5" ry="2.2" fill="#9ec4ea" stroke="#5a8ac0" stroke-width=".6"/><path d="M704.5 420.5 v12" stroke="#d02030" stroke-width="1.3"/><path d="M702.5 431 l2 3 l2 -3z" fill="#d02030"/>
 <path d="M719.5 423.5 q-4 -1 -4.5 3.5 q.5 4.5 4.5 3.5" stroke="#222" stroke-width="1.8" fill="none"/><g fill="#d03040"><circle cx="721" cy="423" r=".8"/><circle cx="723" cy="425" r=".8"/><circle cx="721" cy="427" r=".8"/><circle cx="723" cy="429" r=".8"/><circle cx="721" cy="431" r=".8"/></g>
 <path d="M729.5 432 q1 -2 2 -1 q1 3 3 -3 q1.5 -5 3.5 -4 q2 1 1.5 3" stroke="#c02030" stroke-width="1.4" fill="none"/>
</svg>
<div class="a" style="left:10px;top:438px;width:874.0px;height:2.0px;background:#e4e8ec"></div>
<div class="a" style="left:12px;top:440px;width:55.0px;height:108.0px;background:#f8fafb;border:1px solid #d0d8de;border-radius:3px"></div>
<div class="a" style="left:13px;top:441px;width:53.0px;height:14.0px;background:linear-gradient(#d6e6f6,#f4f8fb)"></div>
<div class="a" style="left:15.1px;top:452.3px;width:22.4px;height:25.5px;background:linear-gradient(#fff2c8,#fde3a0);border:1px solid #eec070;border-radius:3px"></div>
<div class="a" style="left:15.1px;top:481.8px;width:22.4px;height:25.5px;background:linear-gradient(#f2f2f2,#e2e2e2);border:1px solid #dcdcdc;border-radius:3px"></div>
<div class="a" style="left:15.1px;top:512.4px;width:22.4px;height:24.8px;background:linear-gradient(#f2f2f2,#e2e2e2);border:1px solid #dcdcdc;border-radius:3px"></div>
<div class="a" style="left:41.6px;top:452.3px;width:21.8px;height:25.5px;background:linear-gradient(#f2f2f2,#e2e2e2);border:1px solid #dcdcdc;border-radius:3px"></div>
<div class="a" style="left:41.6px;top:481.8px;width:21.8px;height:25.5px;background:linear-gradient(#f2f2f2,#e2e2e2);border:1px solid #dcdcdc;border-radius:3px"></div>
<div class="a" style="left:41.6px;top:512.4px;width:21.8px;height:24.8px;background:linear-gradient(#f2f2f2,#e2e2e2);border:1px solid #dcdcdc;border-radius:3px"></div>
<svg class="a" style="left:12px;top:440px" width="55" height="108" viewBox="12 440 55 108">
 <path d="M19 458 h4 M21 458 v10" stroke="#555" stroke-width="1.6"/><path d="M20.5 468 l.5 3 l.5 -3" stroke="#c04040" stroke-width="1"/>
 <path d="M23 463 l6 -3 l6 3 v7 l-6 3.5 l-6 -3.5z" fill="#3a8ad8"/><path d="M23 463 l6 3 l6 -3 l-6 -3z" fill="#7cc0f4"/><path d="M29 466 v7.5 l6 -3.5 v-7z" fill="#1f5a9a"/>
 <path d="M46.5 455 L46.5 467.5 L61 467.5 Z" fill="#a8ccf4" stroke="#3a68b0" stroke-width="1.2" stroke-linejoin="round"/><path d="M49 461.5 L49 465.5 L53.5 465.5Z" fill="#eef4fc" stroke="#3a68b0" stroke-width=".8"/><rect x="44" y="466" width="19" height="3.6" rx="1" fill="#6c9cdc" stroke="#3a68b0" stroke-width=".8"/><rect x="42.3" y="461.5" width="4" height="13" rx="2" fill="#6c9cdc" stroke="#3a68b0" stroke-width=".8"/>
 <rect x="22" y="486" width="7" height="9" rx="2" fill="#333"/><circle cx="25.5" cy="489" r="1.5" fill="#8aa"/><circle cx="25.5" cy="496" r="2.8" fill="#222"/><path d="M25 499 l-3 5" stroke="#999" stroke-width="1"/>
 <rect x="44.5" y="484.5" width="17" height="5.5" fill="#f2d850" stroke="#6a5a10" stroke-width=".7"/><rect x="46" y="485.7" width="3.5" height="3" fill="#fff8d0" stroke="#555" stroke-width=".4"/><rect x="51.3" y="485.7" width="3.5" height="3" fill="#fff8d0" stroke="#555" stroke-width=".4"/><rect x="56.6" y="485.7" width="3.5" height="3" fill="#fff8d0" stroke="#555" stroke-width=".4"/><path d="M46 491 l7 3 l7 -3 v8.5 l-7 4 l-7 -4z" fill="#e6b878" stroke="#4a3010" stroke-width=".8"/><path d="M53 494 v9.5" stroke="#4a3010" stroke-width=".6"/><path d="M46 491 l3 -1 M60 491 l-3 -1" stroke="#4a3010" stroke-width=".6"/>
 <path d="M20.5 531 v-13" stroke="#2a50c8" stroke-width="1.8"/><path d="M18.5 520 l2 -4 l2 4z" fill="#2a50c8"/><path d="M20.5 531 h10" stroke="#d03030" stroke-width="1.8"/><path d="M29 529 l4 2 l-4 2z" fill="#d03030"/><path d="M20.5 531 l-3.5 3" stroke="#20a040" stroke-width="2"/>
 <path d="M46 524 h9 v8 h-9z" fill="#333"/><path d="M47 520 h6 v4 h-6z" fill="#eee" stroke="#555" stroke-width=".6"/><rect x="48" y="527" width="5" height="3" fill="#ccc"/><path d="M58.5 518 v15" stroke="#888" stroke-width="2.2"/><circle cx="58.5" cy="518.5" r="2" fill="none" stroke="#777" stroke-width="1"/><circle cx="58.5" cy="533" r="2" fill="none" stroke="#777" stroke-width="1"/>
</svg>
<div class="a" style="left:68px;top:440px;width:665.0px;height:108.0px;background:#fff;border:1px solid #d0d6dc;border-radius:3px"></div>
<div class="a" style="left:69px;top:441px;width:663.0px;height:20.0px;background:linear-gradient(#d6e8f8,#eef5fb 60%,#f8fbfd);border-bottom:1px solid #e0e6ea"></div>
<div class="a" style="left:88.4px;top:443.6px;width:13.1px;height:15.9px;background:linear-gradient(#fff2c8,#fde3a0);border:1px solid #eec070;border-radius:3px"></div>
<div class="a" style="left:162px;top:462px;width:1.0px;height:86.0px;background:#e8ecef"></div>
<div class="a" style="left:163px;top:477.5px;width:569.0px;height:1.0px;background:#e6e9ec"></div>
<svg class="a" style="left:68px;top:441px" width="360" height="20" viewBox="68 441 360 20">
 <defs>
  <radialGradient id="gg" cx=".35" cy=".3" r=".8"><stop offset="0" stop-color="#ffffff"/><stop offset=".5" stop-color="#b8c4dc"/><stop offset="1" stop-color="#4a5a80"/></radialGradient>
  <linearGradient id="gl" x1="0" x2="1"><stop offset="0" stop-color="#8a98b8"/><stop offset=".4" stop-color="#f4f6fa"/><stop offset="1" stop-color="#6a7898"/></linearGradient>
  <linearGradient id="gd" x1="0" y1="0" x2="1" y2="1"><stop offset="0" stop-color="#f8f9fc"/><stop offset="1" stop-color="#8894b0"/></linearGradient>
 </defs>
 <g stroke-linejoin="round">
 <rect x="72.5" y="445" width="6" height="5" rx="1" fill="#1a1a1a"/><circle cx="75.5" cy="452.5" r="2.6" fill="#1a1a1a"/><circle cx="75.5" cy="452.5" r="1" fill="#ddd"/><path d="M78.5 448 l5 7.5 l-2 .3 l.8 2 l-1 .4 l-.8 -2 l-1.6 1.2z" fill="#f2d890" stroke="#a08040" stroke-width=".5"/>
 <circle cx="95" cy="451.5" r="1.7" fill="#fff" stroke="#444" stroke-width="1"/>
 <path d="M107 448.5 l2.5 -3.5 l2.5 3.5z" fill="#30a040"/><path d="M108.6 448.5 h1.8 v4 h-1.8z" fill="#30a040"/><rect x="107" y="452.5" width="6.5" height="4.5" fill="#6a8ac8" stroke="#4a5a80" stroke-width=".5"/><path d="M113 452 l6 2.5 l-6 2.5z" fill="#30a040"/><path d="M112 454.5 h2" stroke="#30a040" stroke-width="1.5"/>
 <path d="M126.5 456.5 L134 445.5" stroke="#3a4250" stroke-width="2.8" stroke-linecap="round"/><path d="M126.5 456.5 L134 445.5" stroke="#e8ecf4" stroke-width="1.2" stroke-linecap="round"/>
 <path d="M142.5 456 l2.5 -9 h8.5 l-2.2 9z" fill="url(#gd)" stroke="#3a4250" stroke-width="1"/>
 <circle cx="165" cy="451" r="4.7" fill="url(#gd)" stroke="#3a4250" stroke-width=".9"/><circle cx="165" cy="451" r="2.6" fill="#fff" stroke="#3a4250" stroke-width=".8"/>
 <path d="M183.5 456 L178 448.5 Q183.5 443.5 189 448.5z" fill="#fff" stroke="#3a4250" stroke-width="1"/><path d="M180.5 449 Q183.5 446.5 186.5 449 L183.5 453z" fill="none" stroke="#8a94aa" stroke-width=".8"/>
 <circle cx="201" cy="451" r="5.3" fill="url(#gg)" stroke="#3a4250" stroke-width=".5"/>
 <path d="M214 447 v8.5 q4.25 2 8.5 0 v-8.5z" fill="url(#gl)" stroke="#3a4250" stroke-width=".8"/><ellipse cx="218.25" cy="447" rx="4.25" ry="1.5" fill="#e8ecf4" stroke="#3a4250" stroke-width=".8"/>
 <path d="M236 444.5 L241 456 Q236 458.5 231 456z" fill="url(#gl)" stroke="#3a4250" stroke-width=".8"/>
 <ellipse cx="253.8" cy="451" rx="5.8" ry="4.6" fill="url(#gd)" stroke="#3a4250" stroke-width=".9"/><ellipse cx="253.8" cy="451" rx="3.3" ry="2.3" fill="#fff" stroke="#3a4250" stroke-width=".8"/>
 <rect x="265.5" y="446.5" width="12" height="9" rx="4.5" fill="url(#gd)" stroke="#3a4250" stroke-width=".9"/><rect x="268.5" y="449" width="6" height="4" rx="2" fill="#fff" stroke="#3a4250" stroke-width=".8"/>
 <path d="M284.3 448.5 h7 v7.5 h-7z" fill="url(#gd)" stroke="#4a5470" stroke-width=".8"/><path d="M286.5 446.5 h7.5 v7.5" fill="none" stroke="#4a5470" stroke-width=".8"/><path d="M284.3 448.5 l2.2 -2 M291.3 448.5 l2.7 -2" stroke="#4a5470" stroke-width=".6"/>
 <circle cx="306.8" cy="451" r="5.3" fill="url(#gd)" stroke="#3a4250" stroke-width=".9"/><circle cx="306.8" cy="451" r="2.8" fill="#fff" stroke="#3a4250" stroke-width=".8"/><circle cx="306.8" cy="451" r="1" fill="#3a4250"/>
 <path d="M321 456 Q319.5 451 323.5 451 Q328 451 327.5 446" stroke="#3a4250" stroke-width="2.6" fill="none" stroke-linecap="round"/><path d="M321 456 Q319.5 451 323.5 451 Q328 451 327.5 446" stroke="#e4e8f0" stroke-width="1.1" fill="none" stroke-linecap="round"/>
 <path d="M337 452 l4 -6 q3 2 6.5 1.5 l-3.5 6.5 q-3 -2 -7 -2z" fill="url(#gd)" stroke="#3a4250" stroke-width="1"/>
 <path d="M357.5 445.5 h5 l2.8 5.5 l-2.8 5.5 h-5 l-2.8 -5.5z" fill="url(#gd)" stroke="#3a4250" stroke-width=".9"/><circle cx="360" cy="451" r="2.5" fill="#fff" stroke="#3a4250" stroke-width=".8"/>
 <ellipse cx="377.6" cy="451.5" rx="5.6" ry="4.2" fill="url(#gd)" stroke="#3a4250" stroke-width=".9"/><circle cx="376" cy="450.5" r="1.3" fill="#3a4250"/>
 <circle cx="395.8" cy="451" r="5.4" fill="#5a6680" stroke="#3a4250" stroke-width="1.4" stroke-dasharray="1.2 .9"/><circle cx="395.8" cy="451" r="4" fill="url(#gd)"/><circle cx="395.8" cy="450" r="1.6" fill="#3a4250"/>
 <path d="M408.5 448 Q414 444.5 416.5 451 l2 2.5" stroke="#1e2430" stroke-width="3" fill="none" stroke-linecap="round"/><path d="M408.5 448 Q414 444.5 416.5 451" stroke="#c8d0e0" stroke-width="1.1" fill="none"/>
 </g>
</svg>
<div class="a" style="left:74px;top:468px;width:82.0px;height:66.3px;background:linear-gradient(#383838,#2c2c2c 39%,#242424 40%,#1c1c1c);border-radius:4px"></div>
<div class="a" style="left:75px;top:534.3px;width:80.0px;height:10.7px;background:linear-gradient(rgba(0,0,0,.16),rgba(0,0,0,0))"></div>
<svg class="a" style="left:74px;top:468px" width="82" height="66" viewBox="74 468 82 66"><rect x="79.8" y="474.7" width="8.6" height="16.3" rx="4.3" ry="6" fill="none" stroke="#587494" stroke-width="2.8"/><rect x="79.8" y="498.2" width="8.6" height="16.3" rx="4.3" ry="6" fill="none" stroke="#587494" stroke-width="2.8"/><rect x="97.8" y="483" width="18.5" height="37.2" rx="9.25" ry="13" fill="none" stroke="#3dd6a0" stroke-width="7"/><rect x="128.4" y="483" width="18.5" height="37.2" rx="9.25" ry="13" fill="none" stroke="#3dd6a0" stroke-width="7"/></svg>
<div class="t c" style="left:171.2px;top:465.3px;font-size:10px;color:#111;transform:scaleX(0.66);">名称</div>
<div class="a" style="left:193.2px;top:463.7px;width:52.6px;height:12.5px;border:1px solid #b6c2cc;border-radius:3px;background:linear-gradient(#fff,#f7f9fb)"></div>
<div class="t" style="left:196.2px;top:465.8px;font-size:8.6px;color:#222;transform:scaleX(0.85);">PT13</div>
<div class="a" style="left:250.5px;top:464px;width:34.9px;height:12.2px;border:1px solid #8fa6b6;border-radius:3px;background:linear-gradient(#fafcfd,#e8eef2 50%,#d9e1e7)"></div>
<div class="t" style="left:250.5px;top:464.9px;width:52.9px;text-align:center;font-size:10px;transform:scaleX(0.66)">工作平面</div>
<div class="a" style="left:168.4px;top:481.8px;width:123.1px;height:59.7px;background:linear-gradient(#1c1c1c 0,#2c2c2c 15%,#3a3a3a 22%,#363636 32%,#2a2a2a 40%,#242424 60%,#2c2c2c 78%,#1a1a1a 100%);border-radius:4px"></div>
<div class="a" style="left:169px;top:495.2px;width:122.0px;height:1.2px;background:#8a8a6c;box-shadow:0 0 1px #6a6a50"></div>
<div class="a" style="left:169px;top:510.6px;width:122.0px;height:1.4px;background:#6a9cc8;box-shadow:0 0 1.5px #4a7aa8"></div>
<div class="a" style="left:169px;top:526.6px;width:122.0px;height:1.2px;background:#8a8a6c;box-shadow:0 0 1px #6a6a50"></div>
<div class="a" style="left:170px;top:541.5px;width:120.0px;height:4.5px;background:linear-gradient(rgba(0,0,0,.14),rgba(0,0,0,0))"></div>
<div class="a" style="left:292px;top:478.5px;width:1.0px;height:69.5px;background:#eef0f2"></div>
<div class="a" style="left:299.3px;top:464px;width:68.1px;height:12.2px;border:1px solid #b6c2cc;border-radius:3px;background:linear-gradient(#fff,#f7f9fb)"></div>
<div class="t c" style="left:302px;top:464.9px;font-size:10px;color:#222;transform:scaleX(0.6);">最靠近的CRD平面</div>
<svg class="a" style="left:357.4px;top:468.1px" width="7" height="5"><path d="M0 0 h7 l-3.5 4z" fill="#111"/></svg>
<div class="a" style="left:380.5px;top:463.5px;width:14.9px;height:14.5px;background:linear-gradient(#fafafa,#eeeeee);border:1px solid #e0e0e0;border-bottom:none;border-radius:3px 3px 0 0"></div>
<div class="a" style="left:396.7px;top:463.5px;width:17.3px;height:14.5px;background:linear-gradient(#e8f4fc,#d4e8f6);border:1px solid #a8d0e8;border-bottom:none;border-radius:3px 3px 0 0"></div>
<div class="a" style="left:414.7px;top:463.5px;width:15.8px;height:14.5px;background:linear-gradient(#fafafa,#eeeeee);border:1px solid #e0e0e0;border-bottom:none;border-radius:3px 3px 0 0"></div>
<div class="a" style="left:432.4px;top:463.5px;width:15.8px;height:14.5px;background:linear-gradient(#fafafa,#eeeeee);border:1px solid #e0e0e0;border-bottom:none;border-radius:3px 3px 0 0"></div>
<div class="a" style="left:450.1px;top:463.5px;width:16.8px;height:14.5px;background:linear-gradient(#fafafa,#eeeeee);border:1px solid #e0e0e0;border-bottom:none;border-radius:3px 3px 0 0"></div>
<svg class="a" style="left:380px;top:463px" width="88" height="15" viewBox="380 463 88 15">
 <path d="M383 468 l3 -2 l3 2 v5 l-3 2 l-3 -2z" fill="#2a4a90"/><path d="M390 466 h3 v8 h-3z" fill="#e8e8e8" stroke="#555" stroke-width=".8"/>
 <rect x="399.5" y="466.5" width="11.5" height="8.5" fill="#2a3a78" stroke="#1a2a60"/><path d="M401 472 l3 -3 l2 2 l3 -3" stroke="#8ab0e8" stroke-width=".9" fill="none"/>
 <rect x="417.5" y="466.5" width="10" height="9" fill="#f4f0e0" stroke="#555" stroke-width=".9"/><path d="M417.5 469 h10 M420 466.5 v9 M417.5 472 h10" stroke="#555" stroke-width=".7"/>
 <path d="M436 467 v4 q0 4 4 4 q4 0 4 -4 v-4" stroke="#3a7ad0" stroke-width="2.5" fill="none"/><path d="M443 466 v5" stroke="#333" stroke-width="1.2"/>
 <path d="M453 470 l3 -2 l3 2 v5 l-3 1.5 l-3 -1.5z" fill="#1f4a98"/><rect x="458" y="467" width="6.5" height="8" fill="#dde6f4" stroke="#4a6aa8" stroke-width=".8"/>
</svg>
<div class="t c" style="left:296.5px;top:483.1px;font-size:10px;color:#111;transform:scaleX(0.66);">找到理论</div>
<svg class="a" style="left:326px;top:483px" width="10" height="10"><path d="M5 .5 l4.5 8.5 h-9z" fill="#f0d040" stroke="#8a7010" stroke-width=".7"/><path d="M5 3.5 v3" stroke="#222" stroke-width="1"/></svg>
<div class="a" style="left:337.6px;top:482.4px;width:37.3px;height:11.6px;border:1px solid #b6c2cc;border-radius:3px;background:linear-gradient(#fff,#f7f9fb)"></div>
<div class="a" style="left:376.2px;top:482.4px;width:43.5px;height:11.6px;border:1px solid #b6c2cc;border-radius:3px;background:linear-gradient(#fff,#f7f9fb)"></div>
<div class="t c" style="left:379.2px;top:483.0px;font-size:10px;color:#222;transform:scaleX(0.66);">投影</div>
<svg class="a" style="left:409.7px;top:486.2px" width="7" height="5"><path d="M0 0 h7 l-3.5 4z" fill="#111"/></svg>
<svg class="a" style="left:420px;top:483px" width="10" height="10"><path d="M5 .5 l4.5 8.5 h-9z" fill="#f0d040" stroke="#8a7010" stroke-width=".7"/><path d="M5 3.5 v3" stroke="#222" stroke-width="1"/></svg>
<div class="a" style="left:431.5px;top:482.4px;width:37.3px;height:11.6px;border:1px solid #b6c2cc;border-radius:3px;background:linear-gradient(#fff,#f7f9fb)"></div>
<div class="a" style="left:294.7px;top:497.7px;width:174.6px;height:30.8px;border:1px solid #e6eaee;border-radius:2px"></div>
<div class="t c" style="left:297.8px;top:501.7px;font-size:10px;color:#111;transform:scaleX(0.66);">下公差</div>
<div class="a" style="left:320.8px;top:500.5px;width:37.3px;height:12.1px;border:1px solid #b6c2cc;border-radius:3px;background:linear-gradient(#fff,#f7f9fb)"></div>
<div class="t" style="left:323.8px;top:502.4px;font-size:8.6px;color:#222;transform:scaleX(0.85);">-0.0100</div>
<div class="t c" style="left:297.8px;top:514.8px;font-size:10px;color:#111;transform:scaleX(0.66);">上公差</div>
<div class="a" style="left:320.8px;top:514.5px;width:37.3px;height:11.6px;border:1px solid #b6c2cc;border-radius:3px;background:linear-gradient(#fff,#f7f9fb)"></div>
<div class="t" style="left:323.8px;top:516.2px;font-size:8.6px;color:#222;transform:scaleX(0.85);">0.0100</div>
<div class="t c" style="left:363.7px;top:501.7px;font-size:10px;color:#111;transform:scaleX(0.66);">当前误差</div>
<div class="t c" style="left:363.7px;top:514.8px;font-size:10px;color:#111;transform:scaleX(0.66);">最大误差</div>
<div class="a" style="left:394.5px;top:500.5px;width:29.8px;height:12.1px;border:1px solid #b4c8de;border-radius:3px;background:linear-gradient(#e4ecf8,#d8e4f4)"></div>
<div class="t" style="left:397.5px;top:502.4px;font-size:8.6px;color:#a0a8b8;transform:scaleX(0.85);">At : 1</div>
<div class="a" style="left:394.5px;top:514.5px;width:29.8px;height:11.6px;border:1px solid #b4c8de;border-radius:3px;background:linear-gradient(#e4ecf8,#d8e4f4)"></div>
<div class="t" style="left:397.5px;top:516.2px;font-size:8.6px;color:#a0a8b8;transform:scaleX(0.85);">At : 1</div>
<div class="a" style="left:427.2px;top:500.5px;width:39.1px;height:12.1px;border:1px solid #b4c8de;border-radius:3px;background:linear-gradient(#e4ecf8,#d8e4f4)"></div>
<div class="t" style="left:430.2px;top:502.4px;font-size:8.6px;color:#a0a8b8;transform:scaleX(0.85);">0.000000</div>
<div class="a" style="left:427.2px;top:514.5px;width:39.1px;height:11.6px;border:1px solid #b4c8de;border-radius:3px;background:linear-gradient(#e4ecf8,#d8e4f4)"></div>
<div class="t" style="left:430.2px;top:516.2px;font-size:8.6px;color:#a0a8b8;transform:scaleX(0.85);">0.000000</div>
<svg class="a" style="left:295px;top:532px" width="9" height="11"><rect x=".5" y="1" width="8" height="9" rx="2" fill="#f4f8f0" stroke="#a8b8a0" stroke-width=".8"/><path d="M2 5 l2 3 l3.5 -6" stroke="#40a030" stroke-width="1.3" fill="none"/></svg>
<div class="t c" style="left:306.8px;top:532.5px;font-size:10px;color:#111;transform:scaleX(0.66);">实时计算</div>
<svg class="a" style="left:426px;top:531px" width="44" height="13" viewBox="426 531 44 13">
 <rect x="427" y="533" width="9" height="9" fill="#b8b8b8" stroke="#888" stroke-width=".7"/><path d="M428 541 l8 -8" stroke="#555" stroke-width="1.4"/>
 <path d="M442 538 l5 -5 l4 3 l-5 5z" fill="#d0d0d0" stroke="#888" stroke-width=".7"/><circle cx="449" cy="541.5" r="1.8" fill="#666"/>
 <rect x="459.5" y="533" width="8" height="9" fill="#f4f4f4" stroke="#999" stroke-width=".8"/><path d="M461 537 l2 3 l3.5 -5.5" stroke="#222" stroke-width="1.3" fill="none"/>
</svg>
<div class="a" style="left:734px;top:441px;width:137.0px;height:107.0px;background:#fff;border:1px solid #d0d6dc;border-radius:3px"></div>
<div class="a" style="left:871px;top:441px;width:12.0px;height:107.0px;background:linear-gradient(90deg,#eef3f8,#e4ecf4);border-left:1px solid #d8e0e6"></div>
<div class="a" style="left:870.5px;top:519px;width:12.0px;height:20.0px;background:linear-gradient(90deg,#f4fafe,#e4f2fa);border:1px solid #b8d8ec;border-radius:3px"></div>
<div class="t c" style="left:752.4px;top:450.5px;font-size:10px;color:#111;transform:scaleX(0.66);">接近距离</div>
<div class="t c" style="left:752.4px;top:467.0px;font-size:10px;color:#111;transform:scaleX(0.66);">回退距离</div>
<div class="t c" style="left:752.4px;top:482.7px;font-size:10px;color:#111;transform:scaleX(0.66);">深度</div>
<div class="a" style="left:753.4px;top:498.2px;width:55.1px;height:12.2px;border:1px solid #b6c2cc;border-radius:3px;background:linear-gradient(#fff,#f7f9fb)"></div>
<div class="t c" style="left:756.4px;top:499.1px;font-size:10px;color:#222;transform:scaleX(0.66);">间距离</div>
<svg class="a" style="left:798.5px;top:502.3px" width="7" height="5"><path d="M0 0 h7 l-3.5 4z" fill="#111"/></svg>
<div class="t c" style="left:752.4px;top:514.3px;font-size:10px;color:#111;transform:scaleX(0.66);">搜索距离</div>
<div class="a" style="left:817.2px;top:449.2px;width:46.3px;height:12.9px;border:1px solid #b6c2cc;border-radius:3px;background:linear-gradient(#fff,#f7f9fb)"></div>
<div class="t" style="left:820.2px;top:451.5px;font-size:8.6px;color:#222;transform:scaleX(0.85);">2.0000</div>
<div class="a" style="left:817.2px;top:465.6px;width:46.3px;height:12.8px;border:1px solid #b6c2cc;border-radius:3px;background:linear-gradient(#fff,#f7f9fb)"></div>
<div class="t" style="left:820.2px;top:467.9px;font-size:8.6px;color:#222;transform:scaleX(0.85);">2.0000</div>
<div class="a" style="left:817.2px;top:481.3px;width:46.3px;height:12.8px;border:1px solid #b6c2cc;border-radius:3px;background:linear-gradient(#fff,#f7f9fb)"></div>
<div class="t" style="left:820.2px;top:483.6px;font-size:8.6px;color:#222;transform:scaleX(0.85);">0.0000</div>
<div class="a" style="left:817.2px;top:497.6px;width:46.3px;height:12.8px;border:1px solid #b6c2cc;border-radius:3px;background:linear-gradient(#fff,#f7f9fb)"></div>
<div class="t" style="left:820.2px;top:499.9px;font-size:8.6px;color:#222;transform:scaleX(0.85);">11.0000</div>
<div class="a" style="left:817.2px;top:513.5px;width:46.3px;height:12.8px;border:1px solid #b6c2cc;border-radius:3px;background:linear-gradient(#fff,#f7f9fb)"></div>
<div class="t" style="left:820.2px;top:515.8px;font-size:8.6px;color:#222;transform:scaleX(0.85);">3.0000</div>
<div class="a" style="left:835.6px;top:529.8px;width:26.9px;height:12.2px;border:1px solid #8fa6b6;border-radius:3px;background:linear-gradient(#fafcfd,#e8eef2 50%,#d9e1e7)"></div>
<div class="t" style="left:835.6px;top:530.7px;width:40.8px;text-align:center;font-size:10px;transform:scaleX(0.66)">应用</div>
<svg class="a" style="left:871px;top:441px" width="12" height="107" viewBox="871 441 12 107">
 <path d="M873 449 q0 -1 1 -1 h5 q1 0 1 1 v6 q0 1 -1 1 h-5 q-1 0 -1 -1z" fill="#2a2a2a"/><rect x="874.5" y="445.5" width="3.5" height="3" fill="#b8b8b8"/><circle cx="878" cy="453" r="1.5" fill="#c8a050"/>
 <path d="M872.5 464 h7 v6 l-2 1.5 v3 l-2 -1.5 l-3 -1.5z" fill="#3a5aa8"/><rect x="874" y="465.5" width="4" height="3.5" fill="#9ab8e8"/><path d="M878 471 v4" stroke="#333" stroke-width="1"/>
 <circle cx="875.3" cy="488.5" r="3.4" fill="#d8e8f8" stroke="#3a5a98" stroke-width="1.3"/><circle cx="874.5" cy="487.5" r="1.2" fill="#6a9ad8"/><path d="M877.6 490.8 l3 3" stroke="#222" stroke-width="1.6"/>
 <path d="M872.5 505 l1.5 2 l1.5 -2 M874 507 v3" stroke="#666" stroke-width="1"/><path d="M875 510 l3 -1.8 l3 1.8 v4 l-3 1.8 l-3 -1.8z" fill="#2a68b8"/><path d="M875 510 l3 1.8 l3 -1.8" stroke="#8ac0f0" stroke-width=".7" fill="none"/>
 <circle cx="876.5" cy="529.8" r="3.6" fill="none" stroke="#d09a30" stroke-width="2.4" stroke-dasharray="1.5 .8"/><circle cx="876.5" cy="529.8" r="2.6" fill="#f4d890" stroke="#b07a20" stroke-width=".8"/><circle cx="876.5" cy="529.8" r="1" fill="#fff"/>
 <path d="M872 542 h5 l-2.5 3.5z" fill="#111"/><path d="M878 545.5 h5 l-2.5 -3.5z" fill="#111"/>
</svg>
<div class="a" style="left:9px;top:547.5px;width:876.0px;height:1.0px;background:#c4c8cc"></div>
<div class="a" style="left:9px;top:548.5px;width:876.0px;height:23.0px;border-radius:0 0 7px 7px;border-bottom:1px solid #2c3c56;background:linear-gradient(#f4f9fd 0,#e0eefa 20%,#b4daf4 50%,#a8c0f2 75%,#a4b2f4 88%,#c4ecfc 96%)"></div>
<div class="a" style="left:671.4px;top:553.9px;width:46.5px;height:13.4px;border:1px solid #b6c2cc;border-radius:3px;background:linear-gradient(#fff,#f7f9fb)"></div>
<div class="t c" style="left:674.4px;top:555.4px;font-size:10px;color:#222;transform:scaleX(0.66);">毫米</div>
<svg class="a" style="left:707.9px;top:558.6px" width="7" height="5"><path d="M0 0 h7 l-3.5 4z" fill="#111"/></svg>
<div class="a" style="left:725.5px;top:553.9px;width:46.2px;height:13.4px;border:1px solid #b6c2cc;border-radius:3px;background:linear-gradient(#fff,#f7f9fb)"></div>
<div class="t c" style="left:728.5px;top:555.4px;font-size:10px;color:#222;transform:scaleX(0.66);">角度</div>
<svg class="a" style="left:761.7px;top:558.6px" width="7" height="5"><path d="M0 0 h7 l-3.5 4z" fill="#111"/></svg>
<div class="a" style="left:779.3px;top:553.9px;width:35.5px;height:13.4px;border:1px solid #b6c2cc;border-radius:3px;background:linear-gradient(#fff,#f7f9fb)"></div>
<div class="t" style="left:782.3px;top:556.5px;font-size:8.6px;color:#222;transform:scaleX(0.85);">Cart</div>
<svg class="a" style="left:804.8px;top:558.6px" width="7" height="5"><path d="M0 0 h7 l-3.5 4z" fill="#111"/></svg>
<svg class="a" style="left:824px;top:553px" width="60" height="15" viewBox="824 553 60 15">
 <rect x="825" y="554" width="11.4" height="12" rx="2" fill="#a8c8f0" stroke="#6890c8" stroke-width=".8"/><path d="M827.5 557 v7 h6" stroke="#3a4a90" stroke-width="1" fill="none" stroke-dasharray="1.2 .8"/><circle cx="833.5" cy="557" r="1" fill="#d02020"/><circle cx="828" cy="564" r="1" fill="#d02020"/>
 <rect x="840.2" y="554" width="11.4" height="12" rx="2" fill="#fbe0a0" stroke="#e0b060" stroke-width=".8"/><circle cx="846" cy="559" r="3.2" fill="#d02020"/><path d="M843 564 h6" stroke="#333" stroke-width="1.5"/>
 <rect x="855.4" y="554" width="11.4" height="12" rx="2" fill="#fbe6a8" stroke="#e0b060" stroke-width=".8"/><path d="M858 556 l2.5 8 l1 -4 l3 -4" stroke="#5a5a8a" stroke-width="1.1" fill="none"/>
 <rect x="870.7" y="554" width="11.3" height="12" rx="2" fill="#fbe0a0" stroke="#e0b060" stroke-width=".8"/><circle cx="874" cy="562" r="2" fill="#d03030"/><circle cx="878.5" cy="561" r="2" fill="#c03040"/><path d="M873 557 l3 2" stroke="#30a030" stroke-width="1.6"/><path d="M877 556 l3 3" stroke="#3050b0" stroke-width="1.2"/>
</svg>
</body></html>
